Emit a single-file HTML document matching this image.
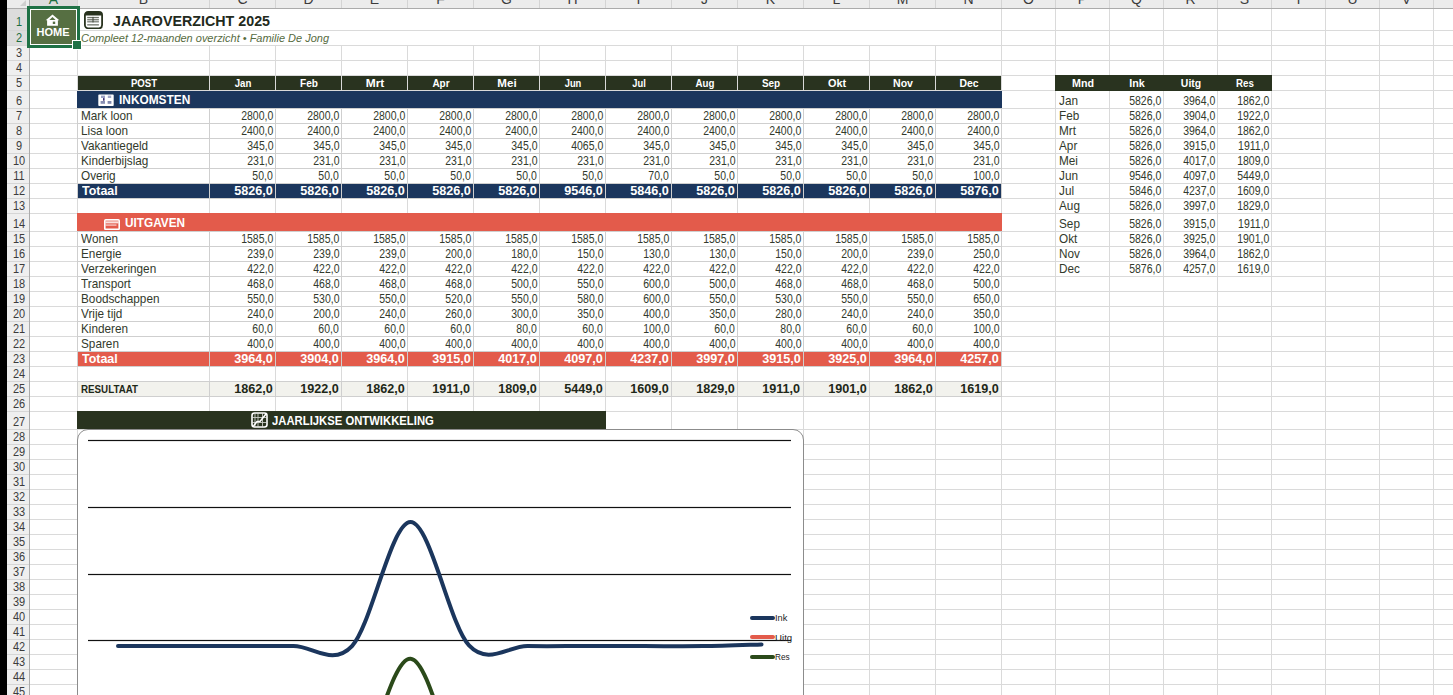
<!DOCTYPE html>
<html><head><meta charset="utf-8"><title>Jaaroverzicht 2025</title>
<style>
html,body{margin:0;padding:0;background:#fff;}
body{width:1453px;height:695px;overflow:hidden;position:relative;font-family:"Liberation Sans", sans-serif;}
.r{position:absolute;}
.t{position:absolute;white-space:nowrap;}
</style></head><body>
<svg class="r" style="left:0;top:0" width="1453" height="695" shape-rendering="crispEdges">
<rect x="77" y="45" width="1" height="650" fill="#dadada"/>
<rect x="209" y="45" width="1" height="650" fill="#dadada"/>
<rect x="275" y="45" width="1" height="650" fill="#dadada"/>
<rect x="341" y="45" width="1" height="650" fill="#dadada"/>
<rect x="407" y="45" width="1" height="650" fill="#dadada"/>
<rect x="473" y="45" width="1" height="650" fill="#dadada"/>
<rect x="539" y="45" width="1" height="650" fill="#dadada"/>
<rect x="605" y="45" width="1" height="650" fill="#dadada"/>
<rect x="671" y="45" width="1" height="650" fill="#dadada"/>
<rect x="737" y="45" width="1" height="650" fill="#dadada"/>
<rect x="803" y="45" width="1" height="650" fill="#dadada"/>
<rect x="869" y="45" width="1" height="650" fill="#dadada"/>
<rect x="935" y="45" width="1" height="650" fill="#dadada"/>
<rect x="1001" y="8" width="1" height="687" fill="#dadada"/>
<rect x="1055" y="8" width="1" height="687" fill="#dadada"/>
<rect x="1109" y="8" width="1" height="687" fill="#dadada"/>
<rect x="1163" y="8" width="1" height="687" fill="#dadada"/>
<rect x="1217" y="8" width="1" height="687" fill="#dadada"/>
<rect x="1271" y="8" width="1" height="687" fill="#dadada"/>
<rect x="1325" y="8" width="1" height="687" fill="#dadada"/>
<rect x="1379" y="8" width="1" height="687" fill="#dadada"/>
<rect x="1433" y="8" width="1" height="687" fill="#dadada"/>
<rect x="29" y="30" width="1424" height="1" fill="#dadada"/>
<rect x="29" y="45" width="1424" height="1" fill="#dadada"/>
<rect x="29" y="60" width="1424" height="1" fill="#dadada"/>
<rect x="29" y="75" width="1424" height="1" fill="#dadada"/>
<rect x="29" y="90" width="1424" height="1" fill="#dadada"/>
<rect x="29" y="108" width="1424" height="1" fill="#dadada"/>
<rect x="29" y="123" width="1424" height="1" fill="#dadada"/>
<rect x="29" y="138" width="1424" height="1" fill="#dadada"/>
<rect x="29" y="153" width="1424" height="1" fill="#dadada"/>
<rect x="29" y="168" width="1424" height="1" fill="#dadada"/>
<rect x="29" y="183" width="1424" height="1" fill="#dadada"/>
<rect x="29" y="198" width="1424" height="1" fill="#dadada"/>
<rect x="29" y="213" width="1424" height="1" fill="#dadada"/>
<rect x="29" y="231" width="1424" height="1" fill="#dadada"/>
<rect x="29" y="246" width="1424" height="1" fill="#dadada"/>
<rect x="29" y="261" width="1424" height="1" fill="#dadada"/>
<rect x="29" y="276" width="1424" height="1" fill="#dadada"/>
<rect x="29" y="291" width="1424" height="1" fill="#dadada"/>
<rect x="29" y="306" width="1424" height="1" fill="#dadada"/>
<rect x="29" y="321" width="1424" height="1" fill="#dadada"/>
<rect x="29" y="336" width="1424" height="1" fill="#dadada"/>
<rect x="29" y="351" width="1424" height="1" fill="#dadada"/>
<rect x="29" y="366" width="1424" height="1" fill="#dadada"/>
<rect x="29" y="381" width="1424" height="1" fill="#dadada"/>
<rect x="29" y="396" width="1424" height="1" fill="#dadada"/>
<rect x="29" y="411" width="1424" height="1" fill="#dadada"/>
<rect x="29" y="429" width="1424" height="1" fill="#dadada"/>
<rect x="29" y="444" width="1424" height="1" fill="#dadada"/>
<rect x="29" y="459" width="1424" height="1" fill="#dadada"/>
<rect x="29" y="474" width="1424" height="1" fill="#dadada"/>
<rect x="29" y="489" width="1424" height="1" fill="#dadada"/>
<rect x="29" y="504" width="1424" height="1" fill="#dadada"/>
<rect x="29" y="519" width="1424" height="1" fill="#dadada"/>
<rect x="29" y="534" width="1424" height="1" fill="#dadada"/>
<rect x="29" y="549" width="1424" height="1" fill="#dadada"/>
<rect x="29" y="564" width="1424" height="1" fill="#dadada"/>
<rect x="29" y="579" width="1424" height="1" fill="#dadada"/>
<rect x="29" y="594" width="1424" height="1" fill="#dadada"/>
<rect x="29" y="609" width="1424" height="1" fill="#dadada"/>
<rect x="29" y="624" width="1424" height="1" fill="#dadada"/>
<rect x="29" y="639" width="1424" height="1" fill="#dadada"/>
<rect x="29" y="654" width="1424" height="1" fill="#dadada"/>
<rect x="29" y="669" width="1424" height="1" fill="#dadada"/>
<rect x="29" y="684" width="1424" height="1" fill="#dadada"/>
<rect x="29" y="699" width="1424" height="1" fill="#dadada"/>
</svg>
<div class="r" style="left:7px;top:0px;width:1446px;height:8px;background:#ececec;"></div>
<div class="r" style="left:29px;top:0px;width:48px;height:8px;background:#dcdcdc;"></div>
<div class="r" style="left:7px;top:8px;width:22px;height:687px;background:#efefef;"></div>
<div class="r" style="left:7px;top:8px;width:22px;height:37px;background:#dcdcdc;"></div>
<svg class="r" style="left:7px;top:0" width="22" height="8"><polygon points="19,0 19,6 13,6" fill="#cfcfcf"/></svg>
<div class="r" style="left:77px;top:0px;width:1px;height:8px;background:#d4d4d4;"></div>
<div class="r" style="left:209px;top:0px;width:1px;height:8px;background:#d4d4d4;"></div>
<div class="r" style="left:275px;top:0px;width:1px;height:8px;background:#d4d4d4;"></div>
<div class="r" style="left:341px;top:0px;width:1px;height:8px;background:#d4d4d4;"></div>
<div class="r" style="left:407px;top:0px;width:1px;height:8px;background:#d4d4d4;"></div>
<div class="r" style="left:473px;top:0px;width:1px;height:8px;background:#d4d4d4;"></div>
<div class="r" style="left:539px;top:0px;width:1px;height:8px;background:#d4d4d4;"></div>
<div class="r" style="left:605px;top:0px;width:1px;height:8px;background:#d4d4d4;"></div>
<div class="r" style="left:671px;top:0px;width:1px;height:8px;background:#d4d4d4;"></div>
<div class="r" style="left:737px;top:0px;width:1px;height:8px;background:#d4d4d4;"></div>
<div class="r" style="left:803px;top:0px;width:1px;height:8px;background:#d4d4d4;"></div>
<div class="r" style="left:869px;top:0px;width:1px;height:8px;background:#d4d4d4;"></div>
<div class="r" style="left:935px;top:0px;width:1px;height:8px;background:#d4d4d4;"></div>
<div class="r" style="left:1001px;top:0px;width:1px;height:8px;background:#d4d4d4;"></div>
<div class="r" style="left:1055px;top:0px;width:1px;height:8px;background:#d4d4d4;"></div>
<div class="r" style="left:1109px;top:0px;width:1px;height:8px;background:#d4d4d4;"></div>
<div class="r" style="left:1163px;top:0px;width:1px;height:8px;background:#d4d4d4;"></div>
<div class="r" style="left:1217px;top:0px;width:1px;height:8px;background:#d4d4d4;"></div>
<div class="r" style="left:1271px;top:0px;width:1px;height:8px;background:#d4d4d4;"></div>
<div class="r" style="left:1325px;top:0px;width:1px;height:8px;background:#d4d4d4;"></div>
<div class="r" style="left:1379px;top:0px;width:1px;height:8px;background:#d4d4d4;"></div>
<div class="r" style="left:1433px;top:0px;width:1px;height:8px;background:#d4d4d4;"></div>
<div class="r" style="left:7px;top:8px;width:1446px;height:1px;background:#ababab;"></div>
<div class="r" style="left:29px;top:0px;width:1px;height:695px;background:#ababab;"></div>
<div class="r" style="left:7px;top:30px;width:22px;height:1px;background:#d6d6d6;"></div>
<div class="r" style="left:7px;top:45px;width:22px;height:1px;background:#d6d6d6;"></div>
<div class="r" style="left:7px;top:60px;width:22px;height:1px;background:#d6d6d6;"></div>
<div class="r" style="left:7px;top:75px;width:22px;height:1px;background:#d6d6d6;"></div>
<div class="r" style="left:7px;top:90px;width:22px;height:1px;background:#d6d6d6;"></div>
<div class="r" style="left:7px;top:108px;width:22px;height:1px;background:#d6d6d6;"></div>
<div class="r" style="left:7px;top:123px;width:22px;height:1px;background:#d6d6d6;"></div>
<div class="r" style="left:7px;top:138px;width:22px;height:1px;background:#d6d6d6;"></div>
<div class="r" style="left:7px;top:153px;width:22px;height:1px;background:#d6d6d6;"></div>
<div class="r" style="left:7px;top:168px;width:22px;height:1px;background:#d6d6d6;"></div>
<div class="r" style="left:7px;top:183px;width:22px;height:1px;background:#d6d6d6;"></div>
<div class="r" style="left:7px;top:198px;width:22px;height:1px;background:#d6d6d6;"></div>
<div class="r" style="left:7px;top:213px;width:22px;height:1px;background:#d6d6d6;"></div>
<div class="r" style="left:7px;top:231px;width:22px;height:1px;background:#d6d6d6;"></div>
<div class="r" style="left:7px;top:246px;width:22px;height:1px;background:#d6d6d6;"></div>
<div class="r" style="left:7px;top:261px;width:22px;height:1px;background:#d6d6d6;"></div>
<div class="r" style="left:7px;top:276px;width:22px;height:1px;background:#d6d6d6;"></div>
<div class="r" style="left:7px;top:291px;width:22px;height:1px;background:#d6d6d6;"></div>
<div class="r" style="left:7px;top:306px;width:22px;height:1px;background:#d6d6d6;"></div>
<div class="r" style="left:7px;top:321px;width:22px;height:1px;background:#d6d6d6;"></div>
<div class="r" style="left:7px;top:336px;width:22px;height:1px;background:#d6d6d6;"></div>
<div class="r" style="left:7px;top:351px;width:22px;height:1px;background:#d6d6d6;"></div>
<div class="r" style="left:7px;top:366px;width:22px;height:1px;background:#d6d6d6;"></div>
<div class="r" style="left:7px;top:381px;width:22px;height:1px;background:#d6d6d6;"></div>
<div class="r" style="left:7px;top:396px;width:22px;height:1px;background:#d6d6d6;"></div>
<div class="r" style="left:7px;top:411px;width:22px;height:1px;background:#d6d6d6;"></div>
<div class="r" style="left:7px;top:429px;width:22px;height:1px;background:#d6d6d6;"></div>
<div class="r" style="left:7px;top:444px;width:22px;height:1px;background:#d6d6d6;"></div>
<div class="r" style="left:7px;top:459px;width:22px;height:1px;background:#d6d6d6;"></div>
<div class="r" style="left:7px;top:474px;width:22px;height:1px;background:#d6d6d6;"></div>
<div class="r" style="left:7px;top:489px;width:22px;height:1px;background:#d6d6d6;"></div>
<div class="r" style="left:7px;top:504px;width:22px;height:1px;background:#d6d6d6;"></div>
<div class="r" style="left:7px;top:519px;width:22px;height:1px;background:#d6d6d6;"></div>
<div class="r" style="left:7px;top:534px;width:22px;height:1px;background:#d6d6d6;"></div>
<div class="r" style="left:7px;top:549px;width:22px;height:1px;background:#d6d6d6;"></div>
<div class="r" style="left:7px;top:564px;width:22px;height:1px;background:#d6d6d6;"></div>
<div class="r" style="left:7px;top:579px;width:22px;height:1px;background:#d6d6d6;"></div>
<div class="r" style="left:7px;top:594px;width:22px;height:1px;background:#d6d6d6;"></div>
<div class="r" style="left:7px;top:609px;width:22px;height:1px;background:#d6d6d6;"></div>
<div class="r" style="left:7px;top:624px;width:22px;height:1px;background:#d6d6d6;"></div>
<div class="r" style="left:7px;top:639px;width:22px;height:1px;background:#d6d6d6;"></div>
<div class="r" style="left:7px;top:654px;width:22px;height:1px;background:#d6d6d6;"></div>
<div class="r" style="left:7px;top:669px;width:22px;height:1px;background:#d6d6d6;"></div>
<div class="r" style="left:7px;top:684px;width:22px;height:1px;background:#d6d6d6;"></div>
<div class="r" style="left:7px;top:699px;width:22px;height:1px;background:#d6d6d6;"></div>
<div class="r" style="left:27px;top:6px;width:53px;height:42px;background:#1e7145;"></div>
<div class="r" style="left:30px;top:9px;width:47px;height:36px;background:#ffffff;"></div>
<div class="r" style="left:31px;top:10px;width:45px;height:34px;background:#566f42;"></div>
<div class="r" style="left:72px;top:40px;width:10px;height:10px;background:#ffffff;"></div>
<div class="r" style="left:73px;top:41px;width:8px;height:8px;background:#1e7145;"></div>
<svg class="r" style="left:45px;top:14px" width="15" height="12" viewBox="0 0 15 12"><path d="M7.5 0.6 L14.3 6.3 L12.9 6.3 L12.9 11.8 L2.1 11.8 L2.1 6.3 L0.7 6.3 Z" fill="#fff"/><path d="M7.5 3.0 L10.6 5.9 L4.4 5.9 Z" fill="#566f42"/><rect x="7.8" y="7.6" width="2.4" height="2.4" fill="#566f42"/></svg>
<div class="t" style="top:26.69px;font-size:11px;line-height:11px;color:#ffffff;font-weight:bold;left:-147px;width:400px;text-align:center;">HOME</div>
<svg class="r" style="left:84px;top:11px" width="19" height="18" viewBox="0 0 19 18"><rect x="0.9" y="0.9" width="17.2" height="16.4" rx="3.2" fill="#fff" stroke="#29331f" stroke-width="1.8"/><path d="M0.9 4.6 V4 A3.2 3.2 0 0 1 4.1 0.9 H14.9 A3.2 3.2 0 0 1 18.1 4 V4.6 Z" fill="#29331f"/><rect x="3.2" y="5.9" width="11.7" height="1.3" fill="#6f746b"/><rect x="3.2" y="8.1" width="11.7" height="1.3" fill="#6f746b"/><rect x="3.2" y="10.2" width="11.7" height="1.2" fill="#6f746b"/><rect x="3.2" y="13.2" width="11.7" height="1.3" fill="#6f746b"/><rect x="8" y="5.9" width="2" height="5.5" fill="#3e4438" opacity="0.5"/></svg>
<div class="r" style="left:78px;top:76px;width:131px;height:14px;background:#29331f;"></div>
<div class="r" style="left:210px;top:76px;width:65px;height:14px;background:#29331f;"></div>
<div class="r" style="left:276px;top:76px;width:65px;height:14px;background:#29331f;"></div>
<div class="r" style="left:342px;top:76px;width:65px;height:14px;background:#29331f;"></div>
<div class="r" style="left:408px;top:76px;width:65px;height:14px;background:#29331f;"></div>
<div class="r" style="left:474px;top:76px;width:65px;height:14px;background:#29331f;"></div>
<div class="r" style="left:540px;top:76px;width:65px;height:14px;background:#29331f;"></div>
<div class="r" style="left:606px;top:76px;width:65px;height:14px;background:#29331f;"></div>
<div class="r" style="left:672px;top:76px;width:65px;height:14px;background:#29331f;"></div>
<div class="r" style="left:738px;top:76px;width:65px;height:14px;background:#29331f;"></div>
<div class="r" style="left:804px;top:76px;width:65px;height:14px;background:#29331f;"></div>
<div class="r" style="left:870px;top:76px;width:65px;height:14px;background:#29331f;"></div>
<div class="r" style="left:936px;top:76px;width:65px;height:14px;background:#29331f;"></div>
<div class="r" style="left:77px;top:75px;width:1px;height:16px;background:#d9d9d9;"></div>
<div class="r" style="left:209px;top:75px;width:1px;height:16px;background:#d9d9d9;"></div>
<div class="r" style="left:275px;top:75px;width:1px;height:16px;background:#d9d9d9;"></div>
<div class="r" style="left:341px;top:75px;width:1px;height:16px;background:#d9d9d9;"></div>
<div class="r" style="left:407px;top:75px;width:1px;height:16px;background:#d9d9d9;"></div>
<div class="r" style="left:473px;top:75px;width:1px;height:16px;background:#d9d9d9;"></div>
<div class="r" style="left:539px;top:75px;width:1px;height:16px;background:#d9d9d9;"></div>
<div class="r" style="left:605px;top:75px;width:1px;height:16px;background:#d9d9d9;"></div>
<div class="r" style="left:671px;top:75px;width:1px;height:16px;background:#d9d9d9;"></div>
<div class="r" style="left:737px;top:75px;width:1px;height:16px;background:#d9d9d9;"></div>
<div class="r" style="left:803px;top:75px;width:1px;height:16px;background:#d9d9d9;"></div>
<div class="r" style="left:869px;top:75px;width:1px;height:16px;background:#d9d9d9;"></div>
<div class="r" style="left:935px;top:75px;width:1px;height:16px;background:#d9d9d9;"></div>
<div class="r" style="left:1001px;top:75px;width:1px;height:16px;background:#d9d9d9;"></div>
<div class="r" style="left:77px;top:90px;width:925px;height:1px;background:#d9d9d9;"></div>
<div class="t" style="top:77.60px;font-size:11.1px;line-height:11.1px;color:#fff;font-weight:bold;transform:scaleX(0.8670);left:-156.0px;width:600px;text-align:center;transform-origin:50% 0;">POST</div>
<div class="t" style="top:77.60px;font-size:11.1px;line-height:11.1px;color:#fff;font-weight:bold;transform:scaleX(0.8679);left:-57.5px;width:600px;text-align:center;transform-origin:50% 0;">Jan</div>
<div class="t" style="top:77.60px;font-size:11.1px;line-height:11.1px;color:#fff;font-weight:bold;transform:scaleX(0.9071);left:8.5px;width:600px;text-align:center;transform-origin:50% 0;">Feb</div>
<div class="t" style="top:77.60px;font-size:11.1px;line-height:11.1px;color:#fff;font-weight:bold;transform:scaleX(1.0774);left:74.5px;width:600px;text-align:center;transform-origin:50% 0;">Mrt</div>
<div class="t" style="top:77.60px;font-size:11.1px;line-height:11.1px;color:#fff;font-weight:bold;transform:scaleX(0.8998);left:140.5px;width:600px;text-align:center;transform-origin:50% 0;">Apr</div>
<div class="t" style="top:77.60px;font-size:11.1px;line-height:11.1px;color:#fff;font-weight:bold;transform:scaleX(1.0430);left:206.5px;width:600px;text-align:center;transform-origin:50% 0;">Mei</div>
<div class="t" style="top:77.60px;font-size:11.1px;line-height:11.1px;color:#fff;font-weight:bold;transform:scaleX(0.8412);left:272.5px;width:600px;text-align:center;transform-origin:50% 0;">Jun</div>
<div class="t" style="top:77.60px;font-size:11.1px;line-height:11.1px;color:#fff;font-weight:bold;transform:scaleX(0.8418);left:338.5px;width:600px;text-align:center;transform-origin:50% 0;">Jul</div>
<div class="t" style="top:77.60px;font-size:11.1px;line-height:11.1px;color:#fff;font-weight:bold;transform:scaleX(0.8760);left:404.5px;width:600px;text-align:center;transform-origin:50% 0;">Aug</div>
<div class="t" style="top:77.60px;font-size:11.1px;line-height:11.1px;color:#fff;font-weight:bold;transform:scaleX(0.8941);left:470.5px;width:600px;text-align:center;transform-origin:50% 0;">Sep</div>
<div class="t" style="top:77.60px;font-size:11.1px;line-height:11.1px;color:#fff;font-weight:bold;transform:scaleX(0.9835);left:536.5px;width:600px;text-align:center;transform-origin:50% 0;">Okt</div>
<div class="t" style="top:77.60px;font-size:11.1px;line-height:11.1px;color:#fff;font-weight:bold;transform:scaleX(0.9538);left:602.5px;width:600px;text-align:center;transform-origin:50% 0;">Nov</div>
<div class="t" style="top:77.60px;font-size:11.1px;line-height:11.1px;color:#fff;font-weight:bold;transform:scaleX(0.9380);left:668.5px;width:600px;text-align:center;transform-origin:50% 0;">Dec</div>
<div class="r" style="left:77px;top:91px;width:925px;height:17px;background:#1b365d;"></div>
<svg class="r" style="left:98px;top:94px" width="16" height="13" viewBox="0 0 16 13"><rect x="0.3" y="0.6" width="15.4" height="11.4" rx="0.8" fill="#fff"/><rect x="3" y="1.6" width="4" height="2.4" fill="#9aa0c4"/><rect x="5" y="4.1" width="1.6" height="2.6" fill="#3d2f73"/><rect x="2.6" y="7" width="4.4" height="2.8" fill="#8890b4"/><rect x="9.8" y="1.6" width="3.4" height="2.4" fill="#a3a8c8"/><rect x="9.6" y="7" width="3.8" height="2.8" fill="#7f88ad"/></svg>
<div class="t" style="top:93.84px;font-size:12px;line-height:12px;color:#fff;font-weight:bold;transform:scaleX(0.9903);left:119.4px;transform-origin:0 0;">INKOMSTEN</div>
<div class="r" style="left:77px;top:108px;width:1px;height:91px;background:#cfcfcf;"></div>
<div class="r" style="left:209px;top:108px;width:1px;height:91px;background:#cfcfcf;"></div>
<div class="r" style="left:275px;top:108px;width:1px;height:91px;background:#cfcfcf;"></div>
<div class="r" style="left:341px;top:108px;width:1px;height:91px;background:#cfcfcf;"></div>
<div class="r" style="left:407px;top:108px;width:1px;height:91px;background:#cfcfcf;"></div>
<div class="r" style="left:473px;top:108px;width:1px;height:91px;background:#cfcfcf;"></div>
<div class="r" style="left:539px;top:108px;width:1px;height:91px;background:#cfcfcf;"></div>
<div class="r" style="left:605px;top:108px;width:1px;height:91px;background:#cfcfcf;"></div>
<div class="r" style="left:671px;top:108px;width:1px;height:91px;background:#cfcfcf;"></div>
<div class="r" style="left:737px;top:108px;width:1px;height:91px;background:#cfcfcf;"></div>
<div class="r" style="left:803px;top:108px;width:1px;height:91px;background:#cfcfcf;"></div>
<div class="r" style="left:869px;top:108px;width:1px;height:91px;background:#cfcfcf;"></div>
<div class="r" style="left:935px;top:108px;width:1px;height:91px;background:#cfcfcf;"></div>
<div class="r" style="left:1001px;top:108px;width:1px;height:91px;background:#cfcfcf;"></div>
<div class="r" style="left:77px;top:108px;width:925px;height:1px;background:#cfcfcf;"></div>
<div class="r" style="left:77px;top:123px;width:925px;height:1px;background:#cfcfcf;"></div>
<div class="r" style="left:77px;top:138px;width:925px;height:1px;background:#cfcfcf;"></div>
<div class="r" style="left:77px;top:153px;width:925px;height:1px;background:#cfcfcf;"></div>
<div class="r" style="left:77px;top:168px;width:925px;height:1px;background:#cfcfcf;"></div>
<div class="r" style="left:77px;top:183px;width:925px;height:1px;background:#cfcfcf;"></div>
<div class="r" style="left:77px;top:198px;width:925px;height:1px;background:#cfcfcf;"></div>
<div class="t" style="top:109.67px;font-size:12.2px;line-height:12.2px;color:#323a2c;transform:scaleX(0.9650);left:80.8px;transform-origin:0 0;">Mark loon</div>
<div class="t" style="top:109.67px;font-size:12.2px;line-height:12.2px;color:#323a2c;transform:scaleX(0.8603);right:1180px;transform-origin:100% 0;">2800,0</div>
<div class="t" style="top:109.67px;font-size:12.2px;line-height:12.2px;color:#323a2c;transform:scaleX(0.8603);right:1114px;transform-origin:100% 0;">2800,0</div>
<div class="t" style="top:109.67px;font-size:12.2px;line-height:12.2px;color:#323a2c;transform:scaleX(0.8603);right:1048px;transform-origin:100% 0;">2800,0</div>
<div class="t" style="top:109.67px;font-size:12.2px;line-height:12.2px;color:#323a2c;transform:scaleX(0.8603);right:982px;transform-origin:100% 0;">2800,0</div>
<div class="t" style="top:109.67px;font-size:12.2px;line-height:12.2px;color:#323a2c;transform:scaleX(0.8603);right:916px;transform-origin:100% 0;">2800,0</div>
<div class="t" style="top:109.67px;font-size:12.2px;line-height:12.2px;color:#323a2c;transform:scaleX(0.8603);right:850px;transform-origin:100% 0;">2800,0</div>
<div class="t" style="top:109.67px;font-size:12.2px;line-height:12.2px;color:#323a2c;transform:scaleX(0.8603);right:784px;transform-origin:100% 0;">2800,0</div>
<div class="t" style="top:109.67px;font-size:12.2px;line-height:12.2px;color:#323a2c;transform:scaleX(0.8603);right:718px;transform-origin:100% 0;">2800,0</div>
<div class="t" style="top:109.67px;font-size:12.2px;line-height:12.2px;color:#323a2c;transform:scaleX(0.8603);right:652px;transform-origin:100% 0;">2800,0</div>
<div class="t" style="top:109.67px;font-size:12.2px;line-height:12.2px;color:#323a2c;transform:scaleX(0.8603);right:586px;transform-origin:100% 0;">2800,0</div>
<div class="t" style="top:109.67px;font-size:12.2px;line-height:12.2px;color:#323a2c;transform:scaleX(0.8603);right:520px;transform-origin:100% 0;">2800,0</div>
<div class="t" style="top:109.67px;font-size:12.2px;line-height:12.2px;color:#323a2c;transform:scaleX(0.8603);right:454px;transform-origin:100% 0;">2800,0</div>
<div class="t" style="top:124.67px;font-size:12.2px;line-height:12.2px;color:#323a2c;transform:scaleX(0.9650);left:80.8px;transform-origin:0 0;">Lisa loon</div>
<div class="t" style="top:124.67px;font-size:12.2px;line-height:12.2px;color:#323a2c;transform:scaleX(0.8603);right:1180px;transform-origin:100% 0;">2400,0</div>
<div class="t" style="top:124.67px;font-size:12.2px;line-height:12.2px;color:#323a2c;transform:scaleX(0.8603);right:1114px;transform-origin:100% 0;">2400,0</div>
<div class="t" style="top:124.67px;font-size:12.2px;line-height:12.2px;color:#323a2c;transform:scaleX(0.8603);right:1048px;transform-origin:100% 0;">2400,0</div>
<div class="t" style="top:124.67px;font-size:12.2px;line-height:12.2px;color:#323a2c;transform:scaleX(0.8603);right:982px;transform-origin:100% 0;">2400,0</div>
<div class="t" style="top:124.67px;font-size:12.2px;line-height:12.2px;color:#323a2c;transform:scaleX(0.8603);right:916px;transform-origin:100% 0;">2400,0</div>
<div class="t" style="top:124.67px;font-size:12.2px;line-height:12.2px;color:#323a2c;transform:scaleX(0.8603);right:850px;transform-origin:100% 0;">2400,0</div>
<div class="t" style="top:124.67px;font-size:12.2px;line-height:12.2px;color:#323a2c;transform:scaleX(0.8603);right:784px;transform-origin:100% 0;">2400,0</div>
<div class="t" style="top:124.67px;font-size:12.2px;line-height:12.2px;color:#323a2c;transform:scaleX(0.8603);right:718px;transform-origin:100% 0;">2400,0</div>
<div class="t" style="top:124.67px;font-size:12.2px;line-height:12.2px;color:#323a2c;transform:scaleX(0.8603);right:652px;transform-origin:100% 0;">2400,0</div>
<div class="t" style="top:124.67px;font-size:12.2px;line-height:12.2px;color:#323a2c;transform:scaleX(0.8603);right:586px;transform-origin:100% 0;">2400,0</div>
<div class="t" style="top:124.67px;font-size:12.2px;line-height:12.2px;color:#323a2c;transform:scaleX(0.8603);right:520px;transform-origin:100% 0;">2400,0</div>
<div class="t" style="top:124.67px;font-size:12.2px;line-height:12.2px;color:#323a2c;transform:scaleX(0.8603);right:454px;transform-origin:100% 0;">2400,0</div>
<div class="t" style="top:139.67px;font-size:12.2px;line-height:12.2px;color:#323a2c;transform:scaleX(0.9650);left:80.8px;transform-origin:0 0;">Vakantiegeld</div>
<div class="t" style="top:139.67px;font-size:12.2px;line-height:12.2px;color:#323a2c;transform:scaleX(0.8603);right:1180px;transform-origin:100% 0;">345,0</div>
<div class="t" style="top:139.67px;font-size:12.2px;line-height:12.2px;color:#323a2c;transform:scaleX(0.8603);right:1114px;transform-origin:100% 0;">345,0</div>
<div class="t" style="top:139.67px;font-size:12.2px;line-height:12.2px;color:#323a2c;transform:scaleX(0.8603);right:1048px;transform-origin:100% 0;">345,0</div>
<div class="t" style="top:139.67px;font-size:12.2px;line-height:12.2px;color:#323a2c;transform:scaleX(0.8603);right:982px;transform-origin:100% 0;">345,0</div>
<div class="t" style="top:139.67px;font-size:12.2px;line-height:12.2px;color:#323a2c;transform:scaleX(0.8603);right:916px;transform-origin:100% 0;">345,0</div>
<div class="t" style="top:139.67px;font-size:12.2px;line-height:12.2px;color:#323a2c;transform:scaleX(0.8603);right:850px;transform-origin:100% 0;">4065,0</div>
<div class="t" style="top:139.67px;font-size:12.2px;line-height:12.2px;color:#323a2c;transform:scaleX(0.8603);right:784px;transform-origin:100% 0;">345,0</div>
<div class="t" style="top:139.67px;font-size:12.2px;line-height:12.2px;color:#323a2c;transform:scaleX(0.8603);right:718px;transform-origin:100% 0;">345,0</div>
<div class="t" style="top:139.67px;font-size:12.2px;line-height:12.2px;color:#323a2c;transform:scaleX(0.8603);right:652px;transform-origin:100% 0;">345,0</div>
<div class="t" style="top:139.67px;font-size:12.2px;line-height:12.2px;color:#323a2c;transform:scaleX(0.8603);right:586px;transform-origin:100% 0;">345,0</div>
<div class="t" style="top:139.67px;font-size:12.2px;line-height:12.2px;color:#323a2c;transform:scaleX(0.8603);right:520px;transform-origin:100% 0;">345,0</div>
<div class="t" style="top:139.67px;font-size:12.2px;line-height:12.2px;color:#323a2c;transform:scaleX(0.8603);right:454px;transform-origin:100% 0;">345,0</div>
<div class="t" style="top:154.67px;font-size:12.2px;line-height:12.2px;color:#323a2c;transform:scaleX(0.9650);left:80.8px;transform-origin:0 0;">Kinderbijslag</div>
<div class="t" style="top:154.67px;font-size:12.2px;line-height:12.2px;color:#323a2c;transform:scaleX(0.8603);right:1180px;transform-origin:100% 0;">231,0</div>
<div class="t" style="top:154.67px;font-size:12.2px;line-height:12.2px;color:#323a2c;transform:scaleX(0.8603);right:1114px;transform-origin:100% 0;">231,0</div>
<div class="t" style="top:154.67px;font-size:12.2px;line-height:12.2px;color:#323a2c;transform:scaleX(0.8603);right:1048px;transform-origin:100% 0;">231,0</div>
<div class="t" style="top:154.67px;font-size:12.2px;line-height:12.2px;color:#323a2c;transform:scaleX(0.8603);right:982px;transform-origin:100% 0;">231,0</div>
<div class="t" style="top:154.67px;font-size:12.2px;line-height:12.2px;color:#323a2c;transform:scaleX(0.8603);right:916px;transform-origin:100% 0;">231,0</div>
<div class="t" style="top:154.67px;font-size:12.2px;line-height:12.2px;color:#323a2c;transform:scaleX(0.8603);right:850px;transform-origin:100% 0;">231,0</div>
<div class="t" style="top:154.67px;font-size:12.2px;line-height:12.2px;color:#323a2c;transform:scaleX(0.8603);right:784px;transform-origin:100% 0;">231,0</div>
<div class="t" style="top:154.67px;font-size:12.2px;line-height:12.2px;color:#323a2c;transform:scaleX(0.8603);right:718px;transform-origin:100% 0;">231,0</div>
<div class="t" style="top:154.67px;font-size:12.2px;line-height:12.2px;color:#323a2c;transform:scaleX(0.8603);right:652px;transform-origin:100% 0;">231,0</div>
<div class="t" style="top:154.67px;font-size:12.2px;line-height:12.2px;color:#323a2c;transform:scaleX(0.8603);right:586px;transform-origin:100% 0;">231,0</div>
<div class="t" style="top:154.67px;font-size:12.2px;line-height:12.2px;color:#323a2c;transform:scaleX(0.8603);right:520px;transform-origin:100% 0;">231,0</div>
<div class="t" style="top:154.67px;font-size:12.2px;line-height:12.2px;color:#323a2c;transform:scaleX(0.8603);right:454px;transform-origin:100% 0;">231,0</div>
<div class="t" style="top:169.67px;font-size:12.2px;line-height:12.2px;color:#323a2c;transform:scaleX(0.9650);left:80.8px;transform-origin:0 0;">Overig</div>
<div class="t" style="top:169.67px;font-size:12.2px;line-height:12.2px;color:#323a2c;transform:scaleX(0.8603);right:1180px;transform-origin:100% 0;">50,0</div>
<div class="t" style="top:169.67px;font-size:12.2px;line-height:12.2px;color:#323a2c;transform:scaleX(0.8603);right:1114px;transform-origin:100% 0;">50,0</div>
<div class="t" style="top:169.67px;font-size:12.2px;line-height:12.2px;color:#323a2c;transform:scaleX(0.8603);right:1048px;transform-origin:100% 0;">50,0</div>
<div class="t" style="top:169.67px;font-size:12.2px;line-height:12.2px;color:#323a2c;transform:scaleX(0.8603);right:982px;transform-origin:100% 0;">50,0</div>
<div class="t" style="top:169.67px;font-size:12.2px;line-height:12.2px;color:#323a2c;transform:scaleX(0.8603);right:916px;transform-origin:100% 0;">50,0</div>
<div class="t" style="top:169.67px;font-size:12.2px;line-height:12.2px;color:#323a2c;transform:scaleX(0.8603);right:850px;transform-origin:100% 0;">50,0</div>
<div class="t" style="top:169.67px;font-size:12.2px;line-height:12.2px;color:#323a2c;transform:scaleX(0.8603);right:784px;transform-origin:100% 0;">70,0</div>
<div class="t" style="top:169.67px;font-size:12.2px;line-height:12.2px;color:#323a2c;transform:scaleX(0.8603);right:718px;transform-origin:100% 0;">50,0</div>
<div class="t" style="top:169.67px;font-size:12.2px;line-height:12.2px;color:#323a2c;transform:scaleX(0.8603);right:652px;transform-origin:100% 0;">50,0</div>
<div class="t" style="top:169.67px;font-size:12.2px;line-height:12.2px;color:#323a2c;transform:scaleX(0.8603);right:586px;transform-origin:100% 0;">50,0</div>
<div class="t" style="top:169.67px;font-size:12.2px;line-height:12.2px;color:#323a2c;transform:scaleX(0.8603);right:520px;transform-origin:100% 0;">50,0</div>
<div class="t" style="top:169.67px;font-size:12.2px;line-height:12.2px;color:#323a2c;transform:scaleX(0.8603);right:454px;transform-origin:100% 0;">100,0</div>
<div class="r" style="left:78px;top:184px;width:131px;height:14px;background:#1b365d;"></div>
<div class="r" style="left:210px;top:184px;width:65px;height:14px;background:#1b365d;"></div>
<div class="r" style="left:276px;top:184px;width:65px;height:14px;background:#1b365d;"></div>
<div class="r" style="left:342px;top:184px;width:65px;height:14px;background:#1b365d;"></div>
<div class="r" style="left:408px;top:184px;width:65px;height:14px;background:#1b365d;"></div>
<div class="r" style="left:474px;top:184px;width:65px;height:14px;background:#1b365d;"></div>
<div class="r" style="left:540px;top:184px;width:65px;height:14px;background:#1b365d;"></div>
<div class="r" style="left:606px;top:184px;width:65px;height:14px;background:#1b365d;"></div>
<div class="r" style="left:672px;top:184px;width:65px;height:14px;background:#1b365d;"></div>
<div class="r" style="left:738px;top:184px;width:65px;height:14px;background:#1b365d;"></div>
<div class="r" style="left:804px;top:184px;width:65px;height:14px;background:#1b365d;"></div>
<div class="r" style="left:870px;top:184px;width:65px;height:14px;background:#1b365d;"></div>
<div class="r" style="left:936px;top:184px;width:65px;height:14px;background:#1b365d;"></div>
<div class="t" style="top:184.00px;font-size:13px;line-height:13px;color:#fff;font-weight:bold;transform:scaleX(0.9566);left:81.5px;transform-origin:0 0;">Totaal</div>
<div class="t" style="top:184.00px;font-size:13px;line-height:13px;color:#fff;font-weight:bold;transform:scaleX(0.9708);right:1180.7px;transform-origin:100% 0;">5826,0</div>
<div class="t" style="top:184.00px;font-size:13px;line-height:13px;color:#fff;font-weight:bold;transform:scaleX(0.9708);right:1114.7px;transform-origin:100% 0;">5826,0</div>
<div class="t" style="top:184.00px;font-size:13px;line-height:13px;color:#fff;font-weight:bold;transform:scaleX(0.9708);right:1048.7px;transform-origin:100% 0;">5826,0</div>
<div class="t" style="top:184.00px;font-size:13px;line-height:13px;color:#fff;font-weight:bold;transform:scaleX(0.9708);right:982.7px;transform-origin:100% 0;">5826,0</div>
<div class="t" style="top:184.00px;font-size:13px;line-height:13px;color:#fff;font-weight:bold;transform:scaleX(0.9708);right:916.7px;transform-origin:100% 0;">5826,0</div>
<div class="t" style="top:184.00px;font-size:13px;line-height:13px;color:#fff;font-weight:bold;transform:scaleX(0.9708);right:850.7px;transform-origin:100% 0;">9546,0</div>
<div class="t" style="top:184.00px;font-size:13px;line-height:13px;color:#fff;font-weight:bold;transform:scaleX(0.9708);right:784.7px;transform-origin:100% 0;">5846,0</div>
<div class="t" style="top:184.00px;font-size:13px;line-height:13px;color:#fff;font-weight:bold;transform:scaleX(0.9708);right:718.7px;transform-origin:100% 0;">5826,0</div>
<div class="t" style="top:184.00px;font-size:13px;line-height:13px;color:#fff;font-weight:bold;transform:scaleX(0.9708);right:652.7px;transform-origin:100% 0;">5826,0</div>
<div class="t" style="top:184.00px;font-size:13px;line-height:13px;color:#fff;font-weight:bold;transform:scaleX(0.9708);right:586.7px;transform-origin:100% 0;">5826,0</div>
<div class="t" style="top:184.00px;font-size:13px;line-height:13px;color:#fff;font-weight:bold;transform:scaleX(0.9708);right:520.7px;transform-origin:100% 0;">5826,0</div>
<div class="t" style="top:184.00px;font-size:13px;line-height:13px;color:#fff;font-weight:bold;transform:scaleX(0.9708);right:454.70000000000005px;transform-origin:100% 0;">5876,0</div>
<div class="r" style="left:77px;top:213px;width:925px;height:18px;background:#e35b4b;"></div>
<svg class="r" style="left:104px;top:219px" width="16" height="11" viewBox="0 0 16 11"><rect x="0.8" y="0.8" width="14.4" height="9.6" rx="1" fill="none" stroke="#fff" stroke-width="1.6"/><rect x="1.5" y="1.5" width="13" height="1.6" fill="#fff" opacity="0.55"/><rect x="1.5" y="3.2" width="13" height="1.1" fill="#fff"/><rect x="1.5" y="5.6" width="11" height="0.9" fill="#fff"/></svg>
<div class="t" style="top:216.84px;font-size:12px;line-height:12px;color:#fff;font-weight:bold;transform:scaleX(0.9818);left:125.3px;transform-origin:0 0;">UITGAVEN</div>
<div class="r" style="left:77px;top:231px;width:1px;height:136px;background:#cfcfcf;"></div>
<div class="r" style="left:209px;top:231px;width:1px;height:136px;background:#cfcfcf;"></div>
<div class="r" style="left:275px;top:231px;width:1px;height:136px;background:#cfcfcf;"></div>
<div class="r" style="left:341px;top:231px;width:1px;height:136px;background:#cfcfcf;"></div>
<div class="r" style="left:407px;top:231px;width:1px;height:136px;background:#cfcfcf;"></div>
<div class="r" style="left:473px;top:231px;width:1px;height:136px;background:#cfcfcf;"></div>
<div class="r" style="left:539px;top:231px;width:1px;height:136px;background:#cfcfcf;"></div>
<div class="r" style="left:605px;top:231px;width:1px;height:136px;background:#cfcfcf;"></div>
<div class="r" style="left:671px;top:231px;width:1px;height:136px;background:#cfcfcf;"></div>
<div class="r" style="left:737px;top:231px;width:1px;height:136px;background:#cfcfcf;"></div>
<div class="r" style="left:803px;top:231px;width:1px;height:136px;background:#cfcfcf;"></div>
<div class="r" style="left:869px;top:231px;width:1px;height:136px;background:#cfcfcf;"></div>
<div class="r" style="left:935px;top:231px;width:1px;height:136px;background:#cfcfcf;"></div>
<div class="r" style="left:1001px;top:231px;width:1px;height:136px;background:#cfcfcf;"></div>
<div class="r" style="left:77px;top:231px;width:925px;height:1px;background:#cfcfcf;"></div>
<div class="r" style="left:77px;top:246px;width:925px;height:1px;background:#cfcfcf;"></div>
<div class="r" style="left:77px;top:261px;width:925px;height:1px;background:#cfcfcf;"></div>
<div class="r" style="left:77px;top:276px;width:925px;height:1px;background:#cfcfcf;"></div>
<div class="r" style="left:77px;top:291px;width:925px;height:1px;background:#cfcfcf;"></div>
<div class="r" style="left:77px;top:306px;width:925px;height:1px;background:#cfcfcf;"></div>
<div class="r" style="left:77px;top:321px;width:925px;height:1px;background:#cfcfcf;"></div>
<div class="r" style="left:77px;top:336px;width:925px;height:1px;background:#cfcfcf;"></div>
<div class="r" style="left:77px;top:351px;width:925px;height:1px;background:#cfcfcf;"></div>
<div class="r" style="left:77px;top:366px;width:925px;height:1px;background:#cfcfcf;"></div>
<div class="t" style="top:232.67px;font-size:12.2px;line-height:12.2px;color:#323a2c;transform:scaleX(0.9650);left:80.8px;transform-origin:0 0;">Wonen</div>
<div class="t" style="top:232.67px;font-size:12.2px;line-height:12.2px;color:#323a2c;transform:scaleX(0.8603);right:1180px;transform-origin:100% 0;">1585,0</div>
<div class="t" style="top:232.67px;font-size:12.2px;line-height:12.2px;color:#323a2c;transform:scaleX(0.8603);right:1114px;transform-origin:100% 0;">1585,0</div>
<div class="t" style="top:232.67px;font-size:12.2px;line-height:12.2px;color:#323a2c;transform:scaleX(0.8603);right:1048px;transform-origin:100% 0;">1585,0</div>
<div class="t" style="top:232.67px;font-size:12.2px;line-height:12.2px;color:#323a2c;transform:scaleX(0.8603);right:982px;transform-origin:100% 0;">1585,0</div>
<div class="t" style="top:232.67px;font-size:12.2px;line-height:12.2px;color:#323a2c;transform:scaleX(0.8603);right:916px;transform-origin:100% 0;">1585,0</div>
<div class="t" style="top:232.67px;font-size:12.2px;line-height:12.2px;color:#323a2c;transform:scaleX(0.8603);right:850px;transform-origin:100% 0;">1585,0</div>
<div class="t" style="top:232.67px;font-size:12.2px;line-height:12.2px;color:#323a2c;transform:scaleX(0.8603);right:784px;transform-origin:100% 0;">1585,0</div>
<div class="t" style="top:232.67px;font-size:12.2px;line-height:12.2px;color:#323a2c;transform:scaleX(0.8603);right:718px;transform-origin:100% 0;">1585,0</div>
<div class="t" style="top:232.67px;font-size:12.2px;line-height:12.2px;color:#323a2c;transform:scaleX(0.8603);right:652px;transform-origin:100% 0;">1585,0</div>
<div class="t" style="top:232.67px;font-size:12.2px;line-height:12.2px;color:#323a2c;transform:scaleX(0.8603);right:586px;transform-origin:100% 0;">1585,0</div>
<div class="t" style="top:232.67px;font-size:12.2px;line-height:12.2px;color:#323a2c;transform:scaleX(0.8603);right:520px;transform-origin:100% 0;">1585,0</div>
<div class="t" style="top:232.67px;font-size:12.2px;line-height:12.2px;color:#323a2c;transform:scaleX(0.8603);right:454px;transform-origin:100% 0;">1585,0</div>
<div class="t" style="top:247.67px;font-size:12.2px;line-height:12.2px;color:#323a2c;transform:scaleX(0.9650);left:80.8px;transform-origin:0 0;">Energie</div>
<div class="t" style="top:247.67px;font-size:12.2px;line-height:12.2px;color:#323a2c;transform:scaleX(0.8603);right:1180px;transform-origin:100% 0;">239,0</div>
<div class="t" style="top:247.67px;font-size:12.2px;line-height:12.2px;color:#323a2c;transform:scaleX(0.8603);right:1114px;transform-origin:100% 0;">239,0</div>
<div class="t" style="top:247.67px;font-size:12.2px;line-height:12.2px;color:#323a2c;transform:scaleX(0.8603);right:1048px;transform-origin:100% 0;">239,0</div>
<div class="t" style="top:247.67px;font-size:12.2px;line-height:12.2px;color:#323a2c;transform:scaleX(0.8603);right:982px;transform-origin:100% 0;">200,0</div>
<div class="t" style="top:247.67px;font-size:12.2px;line-height:12.2px;color:#323a2c;transform:scaleX(0.8603);right:916px;transform-origin:100% 0;">180,0</div>
<div class="t" style="top:247.67px;font-size:12.2px;line-height:12.2px;color:#323a2c;transform:scaleX(0.8603);right:850px;transform-origin:100% 0;">150,0</div>
<div class="t" style="top:247.67px;font-size:12.2px;line-height:12.2px;color:#323a2c;transform:scaleX(0.8603);right:784px;transform-origin:100% 0;">130,0</div>
<div class="t" style="top:247.67px;font-size:12.2px;line-height:12.2px;color:#323a2c;transform:scaleX(0.8603);right:718px;transform-origin:100% 0;">130,0</div>
<div class="t" style="top:247.67px;font-size:12.2px;line-height:12.2px;color:#323a2c;transform:scaleX(0.8603);right:652px;transform-origin:100% 0;">150,0</div>
<div class="t" style="top:247.67px;font-size:12.2px;line-height:12.2px;color:#323a2c;transform:scaleX(0.8603);right:586px;transform-origin:100% 0;">200,0</div>
<div class="t" style="top:247.67px;font-size:12.2px;line-height:12.2px;color:#323a2c;transform:scaleX(0.8603);right:520px;transform-origin:100% 0;">239,0</div>
<div class="t" style="top:247.67px;font-size:12.2px;line-height:12.2px;color:#323a2c;transform:scaleX(0.8603);right:454px;transform-origin:100% 0;">250,0</div>
<div class="t" style="top:262.67px;font-size:12.2px;line-height:12.2px;color:#323a2c;transform:scaleX(0.9650);left:80.8px;transform-origin:0 0;">Verzekeringen</div>
<div class="t" style="top:262.67px;font-size:12.2px;line-height:12.2px;color:#323a2c;transform:scaleX(0.8603);right:1180px;transform-origin:100% 0;">422,0</div>
<div class="t" style="top:262.67px;font-size:12.2px;line-height:12.2px;color:#323a2c;transform:scaleX(0.8603);right:1114px;transform-origin:100% 0;">422,0</div>
<div class="t" style="top:262.67px;font-size:12.2px;line-height:12.2px;color:#323a2c;transform:scaleX(0.8603);right:1048px;transform-origin:100% 0;">422,0</div>
<div class="t" style="top:262.67px;font-size:12.2px;line-height:12.2px;color:#323a2c;transform:scaleX(0.8603);right:982px;transform-origin:100% 0;">422,0</div>
<div class="t" style="top:262.67px;font-size:12.2px;line-height:12.2px;color:#323a2c;transform:scaleX(0.8603);right:916px;transform-origin:100% 0;">422,0</div>
<div class="t" style="top:262.67px;font-size:12.2px;line-height:12.2px;color:#323a2c;transform:scaleX(0.8603);right:850px;transform-origin:100% 0;">422,0</div>
<div class="t" style="top:262.67px;font-size:12.2px;line-height:12.2px;color:#323a2c;transform:scaleX(0.8603);right:784px;transform-origin:100% 0;">422,0</div>
<div class="t" style="top:262.67px;font-size:12.2px;line-height:12.2px;color:#323a2c;transform:scaleX(0.8603);right:718px;transform-origin:100% 0;">422,0</div>
<div class="t" style="top:262.67px;font-size:12.2px;line-height:12.2px;color:#323a2c;transform:scaleX(0.8603);right:652px;transform-origin:100% 0;">422,0</div>
<div class="t" style="top:262.67px;font-size:12.2px;line-height:12.2px;color:#323a2c;transform:scaleX(0.8603);right:586px;transform-origin:100% 0;">422,0</div>
<div class="t" style="top:262.67px;font-size:12.2px;line-height:12.2px;color:#323a2c;transform:scaleX(0.8603);right:520px;transform-origin:100% 0;">422,0</div>
<div class="t" style="top:262.67px;font-size:12.2px;line-height:12.2px;color:#323a2c;transform:scaleX(0.8603);right:454px;transform-origin:100% 0;">422,0</div>
<div class="t" style="top:277.67px;font-size:12.2px;line-height:12.2px;color:#323a2c;transform:scaleX(0.9650);left:80.8px;transform-origin:0 0;">Transport</div>
<div class="t" style="top:277.67px;font-size:12.2px;line-height:12.2px;color:#323a2c;transform:scaleX(0.8603);right:1180px;transform-origin:100% 0;">468,0</div>
<div class="t" style="top:277.67px;font-size:12.2px;line-height:12.2px;color:#323a2c;transform:scaleX(0.8603);right:1114px;transform-origin:100% 0;">468,0</div>
<div class="t" style="top:277.67px;font-size:12.2px;line-height:12.2px;color:#323a2c;transform:scaleX(0.8603);right:1048px;transform-origin:100% 0;">468,0</div>
<div class="t" style="top:277.67px;font-size:12.2px;line-height:12.2px;color:#323a2c;transform:scaleX(0.8603);right:982px;transform-origin:100% 0;">468,0</div>
<div class="t" style="top:277.67px;font-size:12.2px;line-height:12.2px;color:#323a2c;transform:scaleX(0.8603);right:916px;transform-origin:100% 0;">500,0</div>
<div class="t" style="top:277.67px;font-size:12.2px;line-height:12.2px;color:#323a2c;transform:scaleX(0.8603);right:850px;transform-origin:100% 0;">550,0</div>
<div class="t" style="top:277.67px;font-size:12.2px;line-height:12.2px;color:#323a2c;transform:scaleX(0.8603);right:784px;transform-origin:100% 0;">600,0</div>
<div class="t" style="top:277.67px;font-size:12.2px;line-height:12.2px;color:#323a2c;transform:scaleX(0.8603);right:718px;transform-origin:100% 0;">500,0</div>
<div class="t" style="top:277.67px;font-size:12.2px;line-height:12.2px;color:#323a2c;transform:scaleX(0.8603);right:652px;transform-origin:100% 0;">468,0</div>
<div class="t" style="top:277.67px;font-size:12.2px;line-height:12.2px;color:#323a2c;transform:scaleX(0.8603);right:586px;transform-origin:100% 0;">468,0</div>
<div class="t" style="top:277.67px;font-size:12.2px;line-height:12.2px;color:#323a2c;transform:scaleX(0.8603);right:520px;transform-origin:100% 0;">468,0</div>
<div class="t" style="top:277.67px;font-size:12.2px;line-height:12.2px;color:#323a2c;transform:scaleX(0.8603);right:454px;transform-origin:100% 0;">500,0</div>
<div class="t" style="top:292.67px;font-size:12.2px;line-height:12.2px;color:#323a2c;transform:scaleX(0.9650);left:80.8px;transform-origin:0 0;">Boodschappen</div>
<div class="t" style="top:292.67px;font-size:12.2px;line-height:12.2px;color:#323a2c;transform:scaleX(0.8603);right:1180px;transform-origin:100% 0;">550,0</div>
<div class="t" style="top:292.67px;font-size:12.2px;line-height:12.2px;color:#323a2c;transform:scaleX(0.8603);right:1114px;transform-origin:100% 0;">530,0</div>
<div class="t" style="top:292.67px;font-size:12.2px;line-height:12.2px;color:#323a2c;transform:scaleX(0.8603);right:1048px;transform-origin:100% 0;">550,0</div>
<div class="t" style="top:292.67px;font-size:12.2px;line-height:12.2px;color:#323a2c;transform:scaleX(0.8603);right:982px;transform-origin:100% 0;">520,0</div>
<div class="t" style="top:292.67px;font-size:12.2px;line-height:12.2px;color:#323a2c;transform:scaleX(0.8603);right:916px;transform-origin:100% 0;">550,0</div>
<div class="t" style="top:292.67px;font-size:12.2px;line-height:12.2px;color:#323a2c;transform:scaleX(0.8603);right:850px;transform-origin:100% 0;">580,0</div>
<div class="t" style="top:292.67px;font-size:12.2px;line-height:12.2px;color:#323a2c;transform:scaleX(0.8603);right:784px;transform-origin:100% 0;">600,0</div>
<div class="t" style="top:292.67px;font-size:12.2px;line-height:12.2px;color:#323a2c;transform:scaleX(0.8603);right:718px;transform-origin:100% 0;">550,0</div>
<div class="t" style="top:292.67px;font-size:12.2px;line-height:12.2px;color:#323a2c;transform:scaleX(0.8603);right:652px;transform-origin:100% 0;">530,0</div>
<div class="t" style="top:292.67px;font-size:12.2px;line-height:12.2px;color:#323a2c;transform:scaleX(0.8603);right:586px;transform-origin:100% 0;">550,0</div>
<div class="t" style="top:292.67px;font-size:12.2px;line-height:12.2px;color:#323a2c;transform:scaleX(0.8603);right:520px;transform-origin:100% 0;">550,0</div>
<div class="t" style="top:292.67px;font-size:12.2px;line-height:12.2px;color:#323a2c;transform:scaleX(0.8603);right:454px;transform-origin:100% 0;">650,0</div>
<div class="t" style="top:307.67px;font-size:12.2px;line-height:12.2px;color:#323a2c;transform:scaleX(0.9650);left:80.8px;transform-origin:0 0;">Vrije tijd</div>
<div class="t" style="top:307.67px;font-size:12.2px;line-height:12.2px;color:#323a2c;transform:scaleX(0.8603);right:1180px;transform-origin:100% 0;">240,0</div>
<div class="t" style="top:307.67px;font-size:12.2px;line-height:12.2px;color:#323a2c;transform:scaleX(0.8603);right:1114px;transform-origin:100% 0;">200,0</div>
<div class="t" style="top:307.67px;font-size:12.2px;line-height:12.2px;color:#323a2c;transform:scaleX(0.8603);right:1048px;transform-origin:100% 0;">240,0</div>
<div class="t" style="top:307.67px;font-size:12.2px;line-height:12.2px;color:#323a2c;transform:scaleX(0.8603);right:982px;transform-origin:100% 0;">260,0</div>
<div class="t" style="top:307.67px;font-size:12.2px;line-height:12.2px;color:#323a2c;transform:scaleX(0.8603);right:916px;transform-origin:100% 0;">300,0</div>
<div class="t" style="top:307.67px;font-size:12.2px;line-height:12.2px;color:#323a2c;transform:scaleX(0.8603);right:850px;transform-origin:100% 0;">350,0</div>
<div class="t" style="top:307.67px;font-size:12.2px;line-height:12.2px;color:#323a2c;transform:scaleX(0.8603);right:784px;transform-origin:100% 0;">400,0</div>
<div class="t" style="top:307.67px;font-size:12.2px;line-height:12.2px;color:#323a2c;transform:scaleX(0.8603);right:718px;transform-origin:100% 0;">350,0</div>
<div class="t" style="top:307.67px;font-size:12.2px;line-height:12.2px;color:#323a2c;transform:scaleX(0.8603);right:652px;transform-origin:100% 0;">280,0</div>
<div class="t" style="top:307.67px;font-size:12.2px;line-height:12.2px;color:#323a2c;transform:scaleX(0.8603);right:586px;transform-origin:100% 0;">240,0</div>
<div class="t" style="top:307.67px;font-size:12.2px;line-height:12.2px;color:#323a2c;transform:scaleX(0.8603);right:520px;transform-origin:100% 0;">240,0</div>
<div class="t" style="top:307.67px;font-size:12.2px;line-height:12.2px;color:#323a2c;transform:scaleX(0.8603);right:454px;transform-origin:100% 0;">350,0</div>
<div class="t" style="top:322.67px;font-size:12.2px;line-height:12.2px;color:#323a2c;transform:scaleX(0.9650);left:80.8px;transform-origin:0 0;">Kinderen</div>
<div class="t" style="top:322.67px;font-size:12.2px;line-height:12.2px;color:#323a2c;transform:scaleX(0.8603);right:1180px;transform-origin:100% 0;">60,0</div>
<div class="t" style="top:322.67px;font-size:12.2px;line-height:12.2px;color:#323a2c;transform:scaleX(0.8603);right:1114px;transform-origin:100% 0;">60,0</div>
<div class="t" style="top:322.67px;font-size:12.2px;line-height:12.2px;color:#323a2c;transform:scaleX(0.8603);right:1048px;transform-origin:100% 0;">60,0</div>
<div class="t" style="top:322.67px;font-size:12.2px;line-height:12.2px;color:#323a2c;transform:scaleX(0.8603);right:982px;transform-origin:100% 0;">60,0</div>
<div class="t" style="top:322.67px;font-size:12.2px;line-height:12.2px;color:#323a2c;transform:scaleX(0.8603);right:916px;transform-origin:100% 0;">80,0</div>
<div class="t" style="top:322.67px;font-size:12.2px;line-height:12.2px;color:#323a2c;transform:scaleX(0.8603);right:850px;transform-origin:100% 0;">60,0</div>
<div class="t" style="top:322.67px;font-size:12.2px;line-height:12.2px;color:#323a2c;transform:scaleX(0.8603);right:784px;transform-origin:100% 0;">100,0</div>
<div class="t" style="top:322.67px;font-size:12.2px;line-height:12.2px;color:#323a2c;transform:scaleX(0.8603);right:718px;transform-origin:100% 0;">60,0</div>
<div class="t" style="top:322.67px;font-size:12.2px;line-height:12.2px;color:#323a2c;transform:scaleX(0.8603);right:652px;transform-origin:100% 0;">80,0</div>
<div class="t" style="top:322.67px;font-size:12.2px;line-height:12.2px;color:#323a2c;transform:scaleX(0.8603);right:586px;transform-origin:100% 0;">60,0</div>
<div class="t" style="top:322.67px;font-size:12.2px;line-height:12.2px;color:#323a2c;transform:scaleX(0.8603);right:520px;transform-origin:100% 0;">60,0</div>
<div class="t" style="top:322.67px;font-size:12.2px;line-height:12.2px;color:#323a2c;transform:scaleX(0.8603);right:454px;transform-origin:100% 0;">100,0</div>
<div class="t" style="top:337.67px;font-size:12.2px;line-height:12.2px;color:#323a2c;transform:scaleX(0.9650);left:80.8px;transform-origin:0 0;">Sparen</div>
<div class="t" style="top:337.67px;font-size:12.2px;line-height:12.2px;color:#323a2c;transform:scaleX(0.8603);right:1180px;transform-origin:100% 0;">400,0</div>
<div class="t" style="top:337.67px;font-size:12.2px;line-height:12.2px;color:#323a2c;transform:scaleX(0.8603);right:1114px;transform-origin:100% 0;">400,0</div>
<div class="t" style="top:337.67px;font-size:12.2px;line-height:12.2px;color:#323a2c;transform:scaleX(0.8603);right:1048px;transform-origin:100% 0;">400,0</div>
<div class="t" style="top:337.67px;font-size:12.2px;line-height:12.2px;color:#323a2c;transform:scaleX(0.8603);right:982px;transform-origin:100% 0;">400,0</div>
<div class="t" style="top:337.67px;font-size:12.2px;line-height:12.2px;color:#323a2c;transform:scaleX(0.8603);right:916px;transform-origin:100% 0;">400,0</div>
<div class="t" style="top:337.67px;font-size:12.2px;line-height:12.2px;color:#323a2c;transform:scaleX(0.8603);right:850px;transform-origin:100% 0;">400,0</div>
<div class="t" style="top:337.67px;font-size:12.2px;line-height:12.2px;color:#323a2c;transform:scaleX(0.8603);right:784px;transform-origin:100% 0;">400,0</div>
<div class="t" style="top:337.67px;font-size:12.2px;line-height:12.2px;color:#323a2c;transform:scaleX(0.8603);right:718px;transform-origin:100% 0;">400,0</div>
<div class="t" style="top:337.67px;font-size:12.2px;line-height:12.2px;color:#323a2c;transform:scaleX(0.8603);right:652px;transform-origin:100% 0;">400,0</div>
<div class="t" style="top:337.67px;font-size:12.2px;line-height:12.2px;color:#323a2c;transform:scaleX(0.8603);right:586px;transform-origin:100% 0;">400,0</div>
<div class="t" style="top:337.67px;font-size:12.2px;line-height:12.2px;color:#323a2c;transform:scaleX(0.8603);right:520px;transform-origin:100% 0;">400,0</div>
<div class="t" style="top:337.67px;font-size:12.2px;line-height:12.2px;color:#323a2c;transform:scaleX(0.8603);right:454px;transform-origin:100% 0;">400,0</div>
<div class="r" style="left:78px;top:352px;width:131px;height:14px;background:#e35b4b;"></div>
<div class="r" style="left:210px;top:352px;width:65px;height:14px;background:#e35b4b;"></div>
<div class="r" style="left:276px;top:352px;width:65px;height:14px;background:#e35b4b;"></div>
<div class="r" style="left:342px;top:352px;width:65px;height:14px;background:#e35b4b;"></div>
<div class="r" style="left:408px;top:352px;width:65px;height:14px;background:#e35b4b;"></div>
<div class="r" style="left:474px;top:352px;width:65px;height:14px;background:#e35b4b;"></div>
<div class="r" style="left:540px;top:352px;width:65px;height:14px;background:#e35b4b;"></div>
<div class="r" style="left:606px;top:352px;width:65px;height:14px;background:#e35b4b;"></div>
<div class="r" style="left:672px;top:352px;width:65px;height:14px;background:#e35b4b;"></div>
<div class="r" style="left:738px;top:352px;width:65px;height:14px;background:#e35b4b;"></div>
<div class="r" style="left:804px;top:352px;width:65px;height:14px;background:#e35b4b;"></div>
<div class="r" style="left:870px;top:352px;width:65px;height:14px;background:#e35b4b;"></div>
<div class="r" style="left:936px;top:352px;width:65px;height:14px;background:#e35b4b;"></div>
<div class="t" style="top:352.00px;font-size:13px;line-height:13px;color:#fff;font-weight:bold;transform:scaleX(0.9566);left:81.5px;transform-origin:0 0;">Totaal</div>
<div class="t" style="top:352.00px;font-size:13px;line-height:13px;color:#fff;font-weight:bold;transform:scaleX(0.9708);right:1180.7px;transform-origin:100% 0;">3964,0</div>
<div class="t" style="top:352.00px;font-size:13px;line-height:13px;color:#fff;font-weight:bold;transform:scaleX(0.9708);right:1114.7px;transform-origin:100% 0;">3904,0</div>
<div class="t" style="top:352.00px;font-size:13px;line-height:13px;color:#fff;font-weight:bold;transform:scaleX(0.9708);right:1048.7px;transform-origin:100% 0;">3964,0</div>
<div class="t" style="top:352.00px;font-size:13px;line-height:13px;color:#fff;font-weight:bold;transform:scaleX(0.9708);right:982.7px;transform-origin:100% 0;">3915,0</div>
<div class="t" style="top:352.00px;font-size:13px;line-height:13px;color:#fff;font-weight:bold;transform:scaleX(0.9708);right:916.7px;transform-origin:100% 0;">4017,0</div>
<div class="t" style="top:352.00px;font-size:13px;line-height:13px;color:#fff;font-weight:bold;transform:scaleX(0.9708);right:850.7px;transform-origin:100% 0;">4097,0</div>
<div class="t" style="top:352.00px;font-size:13px;line-height:13px;color:#fff;font-weight:bold;transform:scaleX(0.9708);right:784.7px;transform-origin:100% 0;">4237,0</div>
<div class="t" style="top:352.00px;font-size:13px;line-height:13px;color:#fff;font-weight:bold;transform:scaleX(0.9708);right:718.7px;transform-origin:100% 0;">3997,0</div>
<div class="t" style="top:352.00px;font-size:13px;line-height:13px;color:#fff;font-weight:bold;transform:scaleX(0.9708);right:652.7px;transform-origin:100% 0;">3915,0</div>
<div class="t" style="top:352.00px;font-size:13px;line-height:13px;color:#fff;font-weight:bold;transform:scaleX(0.9708);right:586.7px;transform-origin:100% 0;">3925,0</div>
<div class="t" style="top:352.00px;font-size:13px;line-height:13px;color:#fff;font-weight:bold;transform:scaleX(0.9708);right:520.7px;transform-origin:100% 0;">3964,0</div>
<div class="t" style="top:352.00px;font-size:13px;line-height:13px;color:#fff;font-weight:bold;transform:scaleX(0.9708);right:454.70000000000005px;transform-origin:100% 0;">4257,0</div>
<div class="r" style="left:77px;top:381px;width:1px;height:16px;background:#cfcfcf;"></div>
<div class="r" style="left:209px;top:381px;width:1px;height:16px;background:#cfcfcf;"></div>
<div class="r" style="left:275px;top:381px;width:1px;height:16px;background:#cfcfcf;"></div>
<div class="r" style="left:341px;top:381px;width:1px;height:16px;background:#cfcfcf;"></div>
<div class="r" style="left:407px;top:381px;width:1px;height:16px;background:#cfcfcf;"></div>
<div class="r" style="left:473px;top:381px;width:1px;height:16px;background:#cfcfcf;"></div>
<div class="r" style="left:539px;top:381px;width:1px;height:16px;background:#cfcfcf;"></div>
<div class="r" style="left:605px;top:381px;width:1px;height:16px;background:#cfcfcf;"></div>
<div class="r" style="left:671px;top:381px;width:1px;height:16px;background:#cfcfcf;"></div>
<div class="r" style="left:737px;top:381px;width:1px;height:16px;background:#cfcfcf;"></div>
<div class="r" style="left:803px;top:381px;width:1px;height:16px;background:#cfcfcf;"></div>
<div class="r" style="left:869px;top:381px;width:1px;height:16px;background:#cfcfcf;"></div>
<div class="r" style="left:935px;top:381px;width:1px;height:16px;background:#cfcfcf;"></div>
<div class="r" style="left:1001px;top:381px;width:1px;height:16px;background:#cfcfcf;"></div>
<div class="r" style="left:77px;top:381px;width:925px;height:1px;background:#cfcfcf;"></div>
<div class="r" style="left:77px;top:396px;width:925px;height:1px;background:#cfcfcf;"></div>
<div class="r" style="left:78px;top:382px;width:131px;height:14px;background:#f2f2ed;"></div>
<div class="r" style="left:210px;top:382px;width:65px;height:14px;background:#f2f2ed;"></div>
<div class="r" style="left:276px;top:382px;width:65px;height:14px;background:#f2f2ed;"></div>
<div class="r" style="left:342px;top:382px;width:65px;height:14px;background:#f2f2ed;"></div>
<div class="r" style="left:408px;top:382px;width:65px;height:14px;background:#f2f2ed;"></div>
<div class="r" style="left:474px;top:382px;width:65px;height:14px;background:#f2f2ed;"></div>
<div class="r" style="left:540px;top:382px;width:65px;height:14px;background:#f2f2ed;"></div>
<div class="r" style="left:606px;top:382px;width:65px;height:14px;background:#f2f2ed;"></div>
<div class="r" style="left:672px;top:382px;width:65px;height:14px;background:#f2f2ed;"></div>
<div class="r" style="left:738px;top:382px;width:65px;height:14px;background:#f2f2ed;"></div>
<div class="r" style="left:804px;top:382px;width:65px;height:14px;background:#f2f2ed;"></div>
<div class="r" style="left:870px;top:382px;width:65px;height:14px;background:#f2f2ed;"></div>
<div class="r" style="left:936px;top:382px;width:65px;height:14px;background:#f2f2ed;"></div>
<div class="t" style="top:384.27px;font-size:11.5px;line-height:11.5px;color:#1e2818;font-weight:bold;transform:scaleX(0.8498);left:80.8px;transform-origin:0 0;">RESULTAAT</div>
<div class="t" style="top:382.00px;font-size:13px;line-height:13px;color:#1e2818;font-weight:bold;transform:scaleX(0.9708);right:1180.7px;transform-origin:100% 0;">1862,0</div>
<div class="t" style="top:382.00px;font-size:13px;line-height:13px;color:#1e2818;font-weight:bold;transform:scaleX(0.9708);right:1114.7px;transform-origin:100% 0;">1922,0</div>
<div class="t" style="top:382.00px;font-size:13px;line-height:13px;color:#1e2818;font-weight:bold;transform:scaleX(0.9708);right:1048.7px;transform-origin:100% 0;">1862,0</div>
<div class="t" style="top:382.00px;font-size:13px;line-height:13px;color:#1e2818;font-weight:bold;transform:scaleX(0.9708);right:982.7px;transform-origin:100% 0;">1911,0</div>
<div class="t" style="top:382.00px;font-size:13px;line-height:13px;color:#1e2818;font-weight:bold;transform:scaleX(0.9708);right:916.7px;transform-origin:100% 0;">1809,0</div>
<div class="t" style="top:382.00px;font-size:13px;line-height:13px;color:#1e2818;font-weight:bold;transform:scaleX(0.9708);right:850.7px;transform-origin:100% 0;">5449,0</div>
<div class="t" style="top:382.00px;font-size:13px;line-height:13px;color:#1e2818;font-weight:bold;transform:scaleX(0.9708);right:784.7px;transform-origin:100% 0;">1609,0</div>
<div class="t" style="top:382.00px;font-size:13px;line-height:13px;color:#1e2818;font-weight:bold;transform:scaleX(0.9708);right:718.7px;transform-origin:100% 0;">1829,0</div>
<div class="t" style="top:382.00px;font-size:13px;line-height:13px;color:#1e2818;font-weight:bold;transform:scaleX(0.9708);right:652.7px;transform-origin:100% 0;">1911,0</div>
<div class="t" style="top:382.00px;font-size:13px;line-height:13px;color:#1e2818;font-weight:bold;transform:scaleX(0.9708);right:586.7px;transform-origin:100% 0;">1901,0</div>
<div class="t" style="top:382.00px;font-size:13px;line-height:13px;color:#1e2818;font-weight:bold;transform:scaleX(0.9708);right:520.7px;transform-origin:100% 0;">1862,0</div>
<div class="t" style="top:382.00px;font-size:13px;line-height:13px;color:#1e2818;font-weight:bold;transform:scaleX(0.9708);right:454.70000000000005px;transform-origin:100% 0;">1619,0</div>
<div class="r" style="left:1055px;top:75px;width:217px;height:16px;background:#29331f;"></div>
<div class="t" style="top:77.60px;font-size:11.1px;line-height:11.1px;color:#fff;font-weight:bold;transform:scaleX(0.9646);left:782.5px;width:600px;text-align:center;transform-origin:50% 0;">Mnd</div>
<div class="t" style="top:77.60px;font-size:11.1px;line-height:11.1px;color:#fff;font-weight:bold;transform:scaleX(0.9665);left:836.5px;width:600px;text-align:center;transform-origin:50% 0;">Ink</div>
<div class="t" style="top:77.60px;font-size:11.1px;line-height:11.1px;color:#fff;font-weight:bold;transform:scaleX(0.9408);left:890.5px;width:600px;text-align:center;transform-origin:50% 0;">Uitg</div>
<div class="t" style="top:77.60px;font-size:11.1px;line-height:11.1px;color:#fff;font-weight:bold;transform:scaleX(0.8791);left:944.5px;width:600px;text-align:center;transform-origin:50% 0;">Res</div>
<div class="t" style="top:94.87px;font-size:12.2px;line-height:12.2px;color:#323a2c;transform:scaleX(0.9650);left:1059px;transform-origin:0 0;">Jan</div>
<div class="t" style="top:94.87px;font-size:12.2px;line-height:12.2px;color:#323a2c;transform:scaleX(0.8603);right:292px;transform-origin:100% 0;">5826,0</div>
<div class="t" style="top:94.87px;font-size:12.2px;line-height:12.2px;color:#323a2c;transform:scaleX(0.8603);right:238px;transform-origin:100% 0;">3964,0</div>
<div class="t" style="top:94.87px;font-size:12.2px;line-height:12.2px;color:#323a2c;transform:scaleX(0.8603);right:184px;transform-origin:100% 0;">1862,0</div>
<div class="t" style="top:109.67px;font-size:12.2px;line-height:12.2px;color:#323a2c;transform:scaleX(0.9650);left:1059px;transform-origin:0 0;">Feb</div>
<div class="t" style="top:109.67px;font-size:12.2px;line-height:12.2px;color:#323a2c;transform:scaleX(0.8603);right:292px;transform-origin:100% 0;">5826,0</div>
<div class="t" style="top:109.67px;font-size:12.2px;line-height:12.2px;color:#323a2c;transform:scaleX(0.8603);right:238px;transform-origin:100% 0;">3904,0</div>
<div class="t" style="top:109.67px;font-size:12.2px;line-height:12.2px;color:#323a2c;transform:scaleX(0.8603);right:184px;transform-origin:100% 0;">1922,0</div>
<div class="t" style="top:124.67px;font-size:12.2px;line-height:12.2px;color:#323a2c;transform:scaleX(0.9650);left:1059px;transform-origin:0 0;">Mrt</div>
<div class="t" style="top:124.67px;font-size:12.2px;line-height:12.2px;color:#323a2c;transform:scaleX(0.8603);right:292px;transform-origin:100% 0;">5826,0</div>
<div class="t" style="top:124.67px;font-size:12.2px;line-height:12.2px;color:#323a2c;transform:scaleX(0.8603);right:238px;transform-origin:100% 0;">3964,0</div>
<div class="t" style="top:124.67px;font-size:12.2px;line-height:12.2px;color:#323a2c;transform:scaleX(0.8603);right:184px;transform-origin:100% 0;">1862,0</div>
<div class="t" style="top:139.67px;font-size:12.2px;line-height:12.2px;color:#323a2c;transform:scaleX(0.9650);left:1059px;transform-origin:0 0;">Apr</div>
<div class="t" style="top:139.67px;font-size:12.2px;line-height:12.2px;color:#323a2c;transform:scaleX(0.8603);right:292px;transform-origin:100% 0;">5826,0</div>
<div class="t" style="top:139.67px;font-size:12.2px;line-height:12.2px;color:#323a2c;transform:scaleX(0.8603);right:238px;transform-origin:100% 0;">3915,0</div>
<div class="t" style="top:139.67px;font-size:12.2px;line-height:12.2px;color:#323a2c;transform:scaleX(0.8603);right:184px;transform-origin:100% 0;">1911,0</div>
<div class="t" style="top:154.67px;font-size:12.2px;line-height:12.2px;color:#323a2c;transform:scaleX(0.9650);left:1059px;transform-origin:0 0;">Mei</div>
<div class="t" style="top:154.67px;font-size:12.2px;line-height:12.2px;color:#323a2c;transform:scaleX(0.8603);right:292px;transform-origin:100% 0;">5826,0</div>
<div class="t" style="top:154.67px;font-size:12.2px;line-height:12.2px;color:#323a2c;transform:scaleX(0.8603);right:238px;transform-origin:100% 0;">4017,0</div>
<div class="t" style="top:154.67px;font-size:12.2px;line-height:12.2px;color:#323a2c;transform:scaleX(0.8603);right:184px;transform-origin:100% 0;">1809,0</div>
<div class="t" style="top:169.67px;font-size:12.2px;line-height:12.2px;color:#323a2c;transform:scaleX(0.9650);left:1059px;transform-origin:0 0;">Jun</div>
<div class="t" style="top:169.67px;font-size:12.2px;line-height:12.2px;color:#323a2c;transform:scaleX(0.8603);right:292px;transform-origin:100% 0;">9546,0</div>
<div class="t" style="top:169.67px;font-size:12.2px;line-height:12.2px;color:#323a2c;transform:scaleX(0.8603);right:238px;transform-origin:100% 0;">4097,0</div>
<div class="t" style="top:169.67px;font-size:12.2px;line-height:12.2px;color:#323a2c;transform:scaleX(0.8603);right:184px;transform-origin:100% 0;">5449,0</div>
<div class="t" style="top:184.67px;font-size:12.2px;line-height:12.2px;color:#323a2c;transform:scaleX(0.9650);left:1059px;transform-origin:0 0;">Jul</div>
<div class="t" style="top:184.67px;font-size:12.2px;line-height:12.2px;color:#323a2c;transform:scaleX(0.8603);right:292px;transform-origin:100% 0;">5846,0</div>
<div class="t" style="top:184.67px;font-size:12.2px;line-height:12.2px;color:#323a2c;transform:scaleX(0.8603);right:238px;transform-origin:100% 0;">4237,0</div>
<div class="t" style="top:184.67px;font-size:12.2px;line-height:12.2px;color:#323a2c;transform:scaleX(0.8603);right:184px;transform-origin:100% 0;">1609,0</div>
<div class="t" style="top:199.67px;font-size:12.2px;line-height:12.2px;color:#323a2c;transform:scaleX(0.9650);left:1059px;transform-origin:0 0;">Aug</div>
<div class="t" style="top:199.67px;font-size:12.2px;line-height:12.2px;color:#323a2c;transform:scaleX(0.8603);right:292px;transform-origin:100% 0;">5826,0</div>
<div class="t" style="top:199.67px;font-size:12.2px;line-height:12.2px;color:#323a2c;transform:scaleX(0.8603);right:238px;transform-origin:100% 0;">3997,0</div>
<div class="t" style="top:199.67px;font-size:12.2px;line-height:12.2px;color:#323a2c;transform:scaleX(0.8603);right:184px;transform-origin:100% 0;">1829,0</div>
<div class="t" style="top:217.87px;font-size:12.2px;line-height:12.2px;color:#323a2c;transform:scaleX(0.9650);left:1059px;transform-origin:0 0;">Sep</div>
<div class="t" style="top:217.87px;font-size:12.2px;line-height:12.2px;color:#323a2c;transform:scaleX(0.8603);right:292px;transform-origin:100% 0;">5826,0</div>
<div class="t" style="top:217.87px;font-size:12.2px;line-height:12.2px;color:#323a2c;transform:scaleX(0.8603);right:238px;transform-origin:100% 0;">3915,0</div>
<div class="t" style="top:217.87px;font-size:12.2px;line-height:12.2px;color:#323a2c;transform:scaleX(0.8603);right:184px;transform-origin:100% 0;">1911,0</div>
<div class="t" style="top:232.67px;font-size:12.2px;line-height:12.2px;color:#323a2c;transform:scaleX(0.9650);left:1059px;transform-origin:0 0;">Okt</div>
<div class="t" style="top:232.67px;font-size:12.2px;line-height:12.2px;color:#323a2c;transform:scaleX(0.8603);right:292px;transform-origin:100% 0;">5826,0</div>
<div class="t" style="top:232.67px;font-size:12.2px;line-height:12.2px;color:#323a2c;transform:scaleX(0.8603);right:238px;transform-origin:100% 0;">3925,0</div>
<div class="t" style="top:232.67px;font-size:12.2px;line-height:12.2px;color:#323a2c;transform:scaleX(0.8603);right:184px;transform-origin:100% 0;">1901,0</div>
<div class="t" style="top:247.67px;font-size:12.2px;line-height:12.2px;color:#323a2c;transform:scaleX(0.9650);left:1059px;transform-origin:0 0;">Nov</div>
<div class="t" style="top:247.67px;font-size:12.2px;line-height:12.2px;color:#323a2c;transform:scaleX(0.8603);right:292px;transform-origin:100% 0;">5826,0</div>
<div class="t" style="top:247.67px;font-size:12.2px;line-height:12.2px;color:#323a2c;transform:scaleX(0.8603);right:238px;transform-origin:100% 0;">3964,0</div>
<div class="t" style="top:247.67px;font-size:12.2px;line-height:12.2px;color:#323a2c;transform:scaleX(0.8603);right:184px;transform-origin:100% 0;">1862,0</div>
<div class="t" style="top:262.67px;font-size:12.2px;line-height:12.2px;color:#323a2c;transform:scaleX(0.9650);left:1059px;transform-origin:0 0;">Dec</div>
<div class="t" style="top:262.67px;font-size:12.2px;line-height:12.2px;color:#323a2c;transform:scaleX(0.8603);right:292px;transform-origin:100% 0;">5876,0</div>
<div class="t" style="top:262.67px;font-size:12.2px;line-height:12.2px;color:#323a2c;transform:scaleX(0.8603);right:238px;transform-origin:100% 0;">4257,0</div>
<div class="t" style="top:262.67px;font-size:12.2px;line-height:12.2px;color:#323a2c;transform:scaleX(0.8603);right:184px;transform-origin:100% 0;">1619,0</div>
<div class="r" style="left:77px;top:411px;width:529px;height:18px;background:#29331f;"></div>
<svg class="r" style="left:251px;top:412px" width="17" height="16" viewBox="0 0 17 16"><rect x="1" y="1" width="15" height="14" rx="2.5" fill="none" stroke="#fff" stroke-width="1.6"/><path d="M4 1.5V14.5M7 1.5V14.5M11.5 1.5V14.5M1.5 5.5H15.5M1.5 10.5H15.5" stroke="#fff" stroke-width="0.9" opacity="0.75"/><path d="M2.5 14 L6 9.5 L9 9.5 L15 2" stroke="#fff" stroke-width="1.6" fill="none"/></svg>
<div class="t" style="top:415.14px;font-size:12px;line-height:12px;color:#fff;font-weight:bold;transform:scaleX(0.9407);left:271.8px;transform-origin:0 0;">JAARLIJKSE ONTWIKKELING</div>
<svg class="r" style="left:0;top:0" width="1453" height="695">
<rect x="77.5" y="429.5" width="726" height="400" rx="10.5" fill="#fff" stroke="#8c8c8c" stroke-width="1"/>
<rect x="88" y="439.90" width="703" height="1.2" fill="#111"/>
<rect x="88" y="506.90" width="703" height="1.2" fill="#111"/>
<rect x="88" y="573.90" width="703" height="1.2" fill="#111"/>
<rect x="88" y="639.90" width="703" height="1.2" fill="#111"/>
<path d="M118.00 708.17 C127.75 708.50 157.00 710.17 176.50 710.17 C196.00 710.17 215.50 708.23 235.00 708.17 C254.50 708.11 274.00 710.09 293.50 709.80 C313.00 709.51 332.50 707.41 352.00 706.40 C371.50 705.39 391.00 704.96 410.50 703.73 C430.00 702.51 449.50 698.51 469.00 699.07 C488.50 699.62 508.00 705.28 527.50 707.07 C547.00 708.86 566.50 709.40 586.00 709.80 C605.50 710.20 625.00 709.74 644.50 709.47 C664.00 709.19 683.50 710.01 703.00 708.17 C722.50 706.32 751.75 700.03 761.50 698.40" fill="none" stroke="#e35b4b" stroke-width="4" stroke-linecap="round"/>
<path d="M118.00 646.10 C127.75 646.10 157.00 646.10 176.50 646.10 C196.00 646.10 215.50 646.10 235.00 646.10 C254.50 646.10 274.00 646.10 293.50 646.10 C313.00 646.10 332.50 666.77 352.00 646.10 C371.50 625.43 391.00 522.21 410.50 522.10 C430.00 521.99 449.50 624.77 469.00 645.43 C488.50 666.10 508.00 645.99 527.50 646.10 C547.00 646.21 566.50 646.10 586.00 646.10 C605.50 646.10 625.00 646.10 644.50 646.10 C664.00 646.10 683.50 646.38 703.00 646.10 C722.50 645.82 751.75 644.71 761.50 644.43" fill="none" stroke="#1b365d" stroke-width="4" stroke-linecap="round"/>
<path d="M118.00 778.23 C127.75 777.90 157.00 776.23 176.50 776.23 C196.00 776.23 215.50 778.17 235.00 778.23 C254.50 778.29 274.00 776.31 293.50 776.60 C313.00 776.89 332.50 799.66 352.00 780.00 C371.50 760.34 391.00 657.56 410.50 658.67 C430.00 659.78 449.50 766.56 469.00 786.67 C488.50 806.78 508.00 781.01 527.50 779.33 C547.00 777.66 566.50 777.00 586.00 776.60 C605.50 776.20 625.00 776.66 644.50 776.93 C664.00 777.21 683.50 776.67 703.00 778.23 C722.50 779.80 751.75 784.98 761.50 786.33" fill="none" stroke="#2b4a1a" stroke-width="4" stroke-linecap="round"/>
<line x1="752" y1="618" x2="773" y2="618" stroke="#1b365d" stroke-width="4" stroke-linecap="round"/>
<line x1="752" y1="637" x2="773" y2="637" stroke="#e35b4b" stroke-width="4" stroke-linecap="round"/>
<line x1="752" y1="657" x2="773" y2="657" stroke="#2b4a1a" stroke-width="4" stroke-linecap="round"/>
</svg>
<div class="t" style="top:614.22px;font-size:8.6px;line-height:8.6px;color:#222;transform:scaleX(1.0722);left:775.3px;transform-origin:0 0;">Ink</div>
<div class="t" style="top:633.52px;font-size:8.6px;line-height:8.6px;color:#222;transform:scaleX(1.1246);left:775.3px;transform-origin:0 0;">Uitg</div>
<div class="t" style="top:653.12px;font-size:8.6px;line-height:8.6px;color:#222;transform:scaleX(0.9612);left:775.3px;transform-origin:0 0;">Res</div>
<div class="t" style="top:13.30px;font-size:15px;line-height:15px;color:#222a1c;font-weight:bold;transform:scaleX(0.9513);left:113px;transform-origin:0 0;">JAAROVERZICHT 2025</div>
<div class="t" style="top:33.11px;font-size:10.5px;line-height:10.5px;color:#566b3e;font-style:italic;transform:scaleX(1.0459);left:80.8px;transform-origin:0 0;">Compleet 12-maanden overzicht &#8226; Familie De Jong</div>
<div class="t" style="top:-7.95px;font-size:14px;line-height:14px;color:#1d6f42;left:-246.5px;width:600px;text-align:center;transform-origin:50% 0;">A</div>
<div class="t" style="top:-7.95px;font-size:14px;line-height:14px;color:#3c3c3c;left:-156.5px;width:600px;text-align:center;transform-origin:50% 0;">B</div>
<div class="t" style="top:-7.95px;font-size:14px;line-height:14px;color:#3c3c3c;left:-57.5px;width:600px;text-align:center;transform-origin:50% 0;">C</div>
<div class="t" style="top:-7.95px;font-size:14px;line-height:14px;color:#3c3c3c;left:8.5px;width:600px;text-align:center;transform-origin:50% 0;">D</div>
<div class="t" style="top:-7.95px;font-size:14px;line-height:14px;color:#3c3c3c;left:74.5px;width:600px;text-align:center;transform-origin:50% 0;">E</div>
<div class="t" style="top:-7.95px;font-size:14px;line-height:14px;color:#3c3c3c;left:140.5px;width:600px;text-align:center;transform-origin:50% 0;">F</div>
<div class="t" style="top:-7.95px;font-size:14px;line-height:14px;color:#3c3c3c;left:206.5px;width:600px;text-align:center;transform-origin:50% 0;">G</div>
<div class="t" style="top:-7.95px;font-size:14px;line-height:14px;color:#3c3c3c;left:272.5px;width:600px;text-align:center;transform-origin:50% 0;">H</div>
<div class="t" style="top:-7.95px;font-size:14px;line-height:14px;color:#3c3c3c;left:338.5px;width:600px;text-align:center;transform-origin:50% 0;">I</div>
<div class="t" style="top:-7.95px;font-size:14px;line-height:14px;color:#3c3c3c;left:404.5px;width:600px;text-align:center;transform-origin:50% 0;">J</div>
<div class="t" style="top:-7.95px;font-size:14px;line-height:14px;color:#3c3c3c;left:470.5px;width:600px;text-align:center;transform-origin:50% 0;">K</div>
<div class="t" style="top:-7.95px;font-size:14px;line-height:14px;color:#3c3c3c;left:536.5px;width:600px;text-align:center;transform-origin:50% 0;">L</div>
<div class="t" style="top:-7.95px;font-size:14px;line-height:14px;color:#3c3c3c;left:602.5px;width:600px;text-align:center;transform-origin:50% 0;">M</div>
<div class="t" style="top:-7.95px;font-size:14px;line-height:14px;color:#3c3c3c;left:668.5px;width:600px;text-align:center;transform-origin:50% 0;">N</div>
<div class="t" style="top:-7.95px;font-size:14px;line-height:14px;color:#3c3c3c;left:728.5px;width:600px;text-align:center;transform-origin:50% 0;">O</div>
<div class="t" style="top:-7.95px;font-size:14px;line-height:14px;color:#3c3c3c;left:782.5px;width:600px;text-align:center;transform-origin:50% 0;">P</div>
<div class="t" style="top:-7.95px;font-size:14px;line-height:14px;color:#3c3c3c;left:836.5px;width:600px;text-align:center;transform-origin:50% 0;">Q</div>
<div class="t" style="top:-7.95px;font-size:14px;line-height:14px;color:#3c3c3c;left:890.5px;width:600px;text-align:center;transform-origin:50% 0;">R</div>
<div class="t" style="top:-7.95px;font-size:14px;line-height:14px;color:#3c3c3c;left:944.5px;width:600px;text-align:center;transform-origin:50% 0;">S</div>
<div class="t" style="top:-7.95px;font-size:14px;line-height:14px;color:#3c3c3c;left:998.5px;width:600px;text-align:center;transform-origin:50% 0;">T</div>
<div class="t" style="top:-7.95px;font-size:14px;line-height:14px;color:#3c3c3c;left:1052.5px;width:600px;text-align:center;transform-origin:50% 0;">U</div>
<div class="t" style="top:-7.95px;font-size:14px;line-height:14px;color:#3c3c3c;left:1106.5px;width:600px;text-align:center;transform-origin:50% 0;">V</div>
<div class="t" style="top:-7.95px;font-size:14px;line-height:14px;color:#3c3c3c;left:1160.5px;width:600px;text-align:center;transform-origin:50% 0;">W</div>
<div class="t" style="top:15.67px;font-size:12.2px;line-height:12.2px;color:#1d6f42;transform:scaleX(0.9000);left:-281.5px;width:600px;text-align:center;transform-origin:50% 0;">1</div>
<div class="t" style="top:31.67px;font-size:12.2px;line-height:12.2px;color:#1d6f42;transform:scaleX(0.9000);left:-281.5px;width:600px;text-align:center;transform-origin:50% 0;">2</div>
<div class="t" style="top:46.67px;font-size:12.2px;line-height:12.2px;color:#3c3c3c;transform:scaleX(0.9000);left:-281.5px;width:600px;text-align:center;transform-origin:50% 0;">3</div>
<div class="t" style="top:61.67px;font-size:12.2px;line-height:12.2px;color:#3c3c3c;transform:scaleX(0.9000);left:-281.5px;width:600px;text-align:center;transform-origin:50% 0;">4</div>
<div class="t" style="top:76.67px;font-size:12.2px;line-height:12.2px;color:#3c3c3c;transform:scaleX(0.9000);left:-281.5px;width:600px;text-align:center;transform-origin:50% 0;">5</div>
<div class="t" style="top:94.67px;font-size:12.2px;line-height:12.2px;color:#3c3c3c;transform:scaleX(0.9000);left:-281.5px;width:600px;text-align:center;transform-origin:50% 0;">6</div>
<div class="t" style="top:109.67px;font-size:12.2px;line-height:12.2px;color:#3c3c3c;transform:scaleX(0.9000);left:-281.5px;width:600px;text-align:center;transform-origin:50% 0;">7</div>
<div class="t" style="top:124.67px;font-size:12.2px;line-height:12.2px;color:#3c3c3c;transform:scaleX(0.9000);left:-281.5px;width:600px;text-align:center;transform-origin:50% 0;">8</div>
<div class="t" style="top:139.67px;font-size:12.2px;line-height:12.2px;color:#3c3c3c;transform:scaleX(0.9000);left:-281.5px;width:600px;text-align:center;transform-origin:50% 0;">9</div>
<div class="t" style="top:154.67px;font-size:12.2px;line-height:12.2px;color:#3c3c3c;transform:scaleX(0.9000);left:-281.5px;width:600px;text-align:center;transform-origin:50% 0;">10</div>
<div class="t" style="top:169.67px;font-size:12.2px;line-height:12.2px;color:#3c3c3c;transform:scaleX(0.9000);left:-281.5px;width:600px;text-align:center;transform-origin:50% 0;">11</div>
<div class="t" style="top:184.67px;font-size:12.2px;line-height:12.2px;color:#3c3c3c;transform:scaleX(0.9000);left:-281.5px;width:600px;text-align:center;transform-origin:50% 0;">12</div>
<div class="t" style="top:199.67px;font-size:12.2px;line-height:12.2px;color:#3c3c3c;transform:scaleX(0.9000);left:-281.5px;width:600px;text-align:center;transform-origin:50% 0;">13</div>
<div class="t" style="top:217.67px;font-size:12.2px;line-height:12.2px;color:#3c3c3c;transform:scaleX(0.9000);left:-281.5px;width:600px;text-align:center;transform-origin:50% 0;">14</div>
<div class="t" style="top:232.67px;font-size:12.2px;line-height:12.2px;color:#3c3c3c;transform:scaleX(0.9000);left:-281.5px;width:600px;text-align:center;transform-origin:50% 0;">15</div>
<div class="t" style="top:247.67px;font-size:12.2px;line-height:12.2px;color:#3c3c3c;transform:scaleX(0.9000);left:-281.5px;width:600px;text-align:center;transform-origin:50% 0;">16</div>
<div class="t" style="top:262.67px;font-size:12.2px;line-height:12.2px;color:#3c3c3c;transform:scaleX(0.9000);left:-281.5px;width:600px;text-align:center;transform-origin:50% 0;">17</div>
<div class="t" style="top:277.67px;font-size:12.2px;line-height:12.2px;color:#3c3c3c;transform:scaleX(0.9000);left:-281.5px;width:600px;text-align:center;transform-origin:50% 0;">18</div>
<div class="t" style="top:292.67px;font-size:12.2px;line-height:12.2px;color:#3c3c3c;transform:scaleX(0.9000);left:-281.5px;width:600px;text-align:center;transform-origin:50% 0;">19</div>
<div class="t" style="top:307.67px;font-size:12.2px;line-height:12.2px;color:#3c3c3c;transform:scaleX(0.9000);left:-281.5px;width:600px;text-align:center;transform-origin:50% 0;">20</div>
<div class="t" style="top:322.67px;font-size:12.2px;line-height:12.2px;color:#3c3c3c;transform:scaleX(0.9000);left:-281.5px;width:600px;text-align:center;transform-origin:50% 0;">21</div>
<div class="t" style="top:337.67px;font-size:12.2px;line-height:12.2px;color:#3c3c3c;transform:scaleX(0.9000);left:-281.5px;width:600px;text-align:center;transform-origin:50% 0;">22</div>
<div class="t" style="top:352.67px;font-size:12.2px;line-height:12.2px;color:#3c3c3c;transform:scaleX(0.9000);left:-281.5px;width:600px;text-align:center;transform-origin:50% 0;">23</div>
<div class="t" style="top:367.67px;font-size:12.2px;line-height:12.2px;color:#3c3c3c;transform:scaleX(0.9000);left:-281.5px;width:600px;text-align:center;transform-origin:50% 0;">24</div>
<div class="t" style="top:382.67px;font-size:12.2px;line-height:12.2px;color:#3c3c3c;transform:scaleX(0.9000);left:-281.5px;width:600px;text-align:center;transform-origin:50% 0;">25</div>
<div class="t" style="top:397.67px;font-size:12.2px;line-height:12.2px;color:#3c3c3c;transform:scaleX(0.9000);left:-281.5px;width:600px;text-align:center;transform-origin:50% 0;">26</div>
<div class="t" style="top:415.67px;font-size:12.2px;line-height:12.2px;color:#3c3c3c;transform:scaleX(0.9000);left:-281.5px;width:600px;text-align:center;transform-origin:50% 0;">27</div>
<div class="t" style="top:430.67px;font-size:12.2px;line-height:12.2px;color:#3c3c3c;transform:scaleX(0.9000);left:-281.5px;width:600px;text-align:center;transform-origin:50% 0;">28</div>
<div class="t" style="top:445.67px;font-size:12.2px;line-height:12.2px;color:#3c3c3c;transform:scaleX(0.9000);left:-281.5px;width:600px;text-align:center;transform-origin:50% 0;">29</div>
<div class="t" style="top:460.67px;font-size:12.2px;line-height:12.2px;color:#3c3c3c;transform:scaleX(0.9000);left:-281.5px;width:600px;text-align:center;transform-origin:50% 0;">30</div>
<div class="t" style="top:475.67px;font-size:12.2px;line-height:12.2px;color:#3c3c3c;transform:scaleX(0.9000);left:-281.5px;width:600px;text-align:center;transform-origin:50% 0;">31</div>
<div class="t" style="top:490.67px;font-size:12.2px;line-height:12.2px;color:#3c3c3c;transform:scaleX(0.9000);left:-281.5px;width:600px;text-align:center;transform-origin:50% 0;">32</div>
<div class="t" style="top:505.67px;font-size:12.2px;line-height:12.2px;color:#3c3c3c;transform:scaleX(0.9000);left:-281.5px;width:600px;text-align:center;transform-origin:50% 0;">33</div>
<div class="t" style="top:520.67px;font-size:12.2px;line-height:12.2px;color:#3c3c3c;transform:scaleX(0.9000);left:-281.5px;width:600px;text-align:center;transform-origin:50% 0;">34</div>
<div class="t" style="top:535.67px;font-size:12.2px;line-height:12.2px;color:#3c3c3c;transform:scaleX(0.9000);left:-281.5px;width:600px;text-align:center;transform-origin:50% 0;">35</div>
<div class="t" style="top:550.67px;font-size:12.2px;line-height:12.2px;color:#3c3c3c;transform:scaleX(0.9000);left:-281.5px;width:600px;text-align:center;transform-origin:50% 0;">36</div>
<div class="t" style="top:565.67px;font-size:12.2px;line-height:12.2px;color:#3c3c3c;transform:scaleX(0.9000);left:-281.5px;width:600px;text-align:center;transform-origin:50% 0;">37</div>
<div class="t" style="top:580.67px;font-size:12.2px;line-height:12.2px;color:#3c3c3c;transform:scaleX(0.9000);left:-281.5px;width:600px;text-align:center;transform-origin:50% 0;">38</div>
<div class="t" style="top:595.67px;font-size:12.2px;line-height:12.2px;color:#3c3c3c;transform:scaleX(0.9000);left:-281.5px;width:600px;text-align:center;transform-origin:50% 0;">39</div>
<div class="t" style="top:610.67px;font-size:12.2px;line-height:12.2px;color:#3c3c3c;transform:scaleX(0.9000);left:-281.5px;width:600px;text-align:center;transform-origin:50% 0;">40</div>
<div class="t" style="top:625.67px;font-size:12.2px;line-height:12.2px;color:#3c3c3c;transform:scaleX(0.9000);left:-281.5px;width:600px;text-align:center;transform-origin:50% 0;">41</div>
<div class="t" style="top:640.67px;font-size:12.2px;line-height:12.2px;color:#3c3c3c;transform:scaleX(0.9000);left:-281.5px;width:600px;text-align:center;transform-origin:50% 0;">42</div>
<div class="t" style="top:655.67px;font-size:12.2px;line-height:12.2px;color:#3c3c3c;transform:scaleX(0.9000);left:-281.5px;width:600px;text-align:center;transform-origin:50% 0;">43</div>
<div class="t" style="top:670.67px;font-size:12.2px;line-height:12.2px;color:#3c3c3c;transform:scaleX(0.9000);left:-281.5px;width:600px;text-align:center;transform-origin:50% 0;">44</div>
<div class="t" style="top:685.67px;font-size:12.2px;line-height:12.2px;color:#3c3c3c;transform:scaleX(0.9000);left:-281.5px;width:600px;text-align:center;transform-origin:50% 0;">45</div>
<div class="r" style="left:0px;top:0px;width:7px;height:695px;background:#000;"></div>
</body></html>
